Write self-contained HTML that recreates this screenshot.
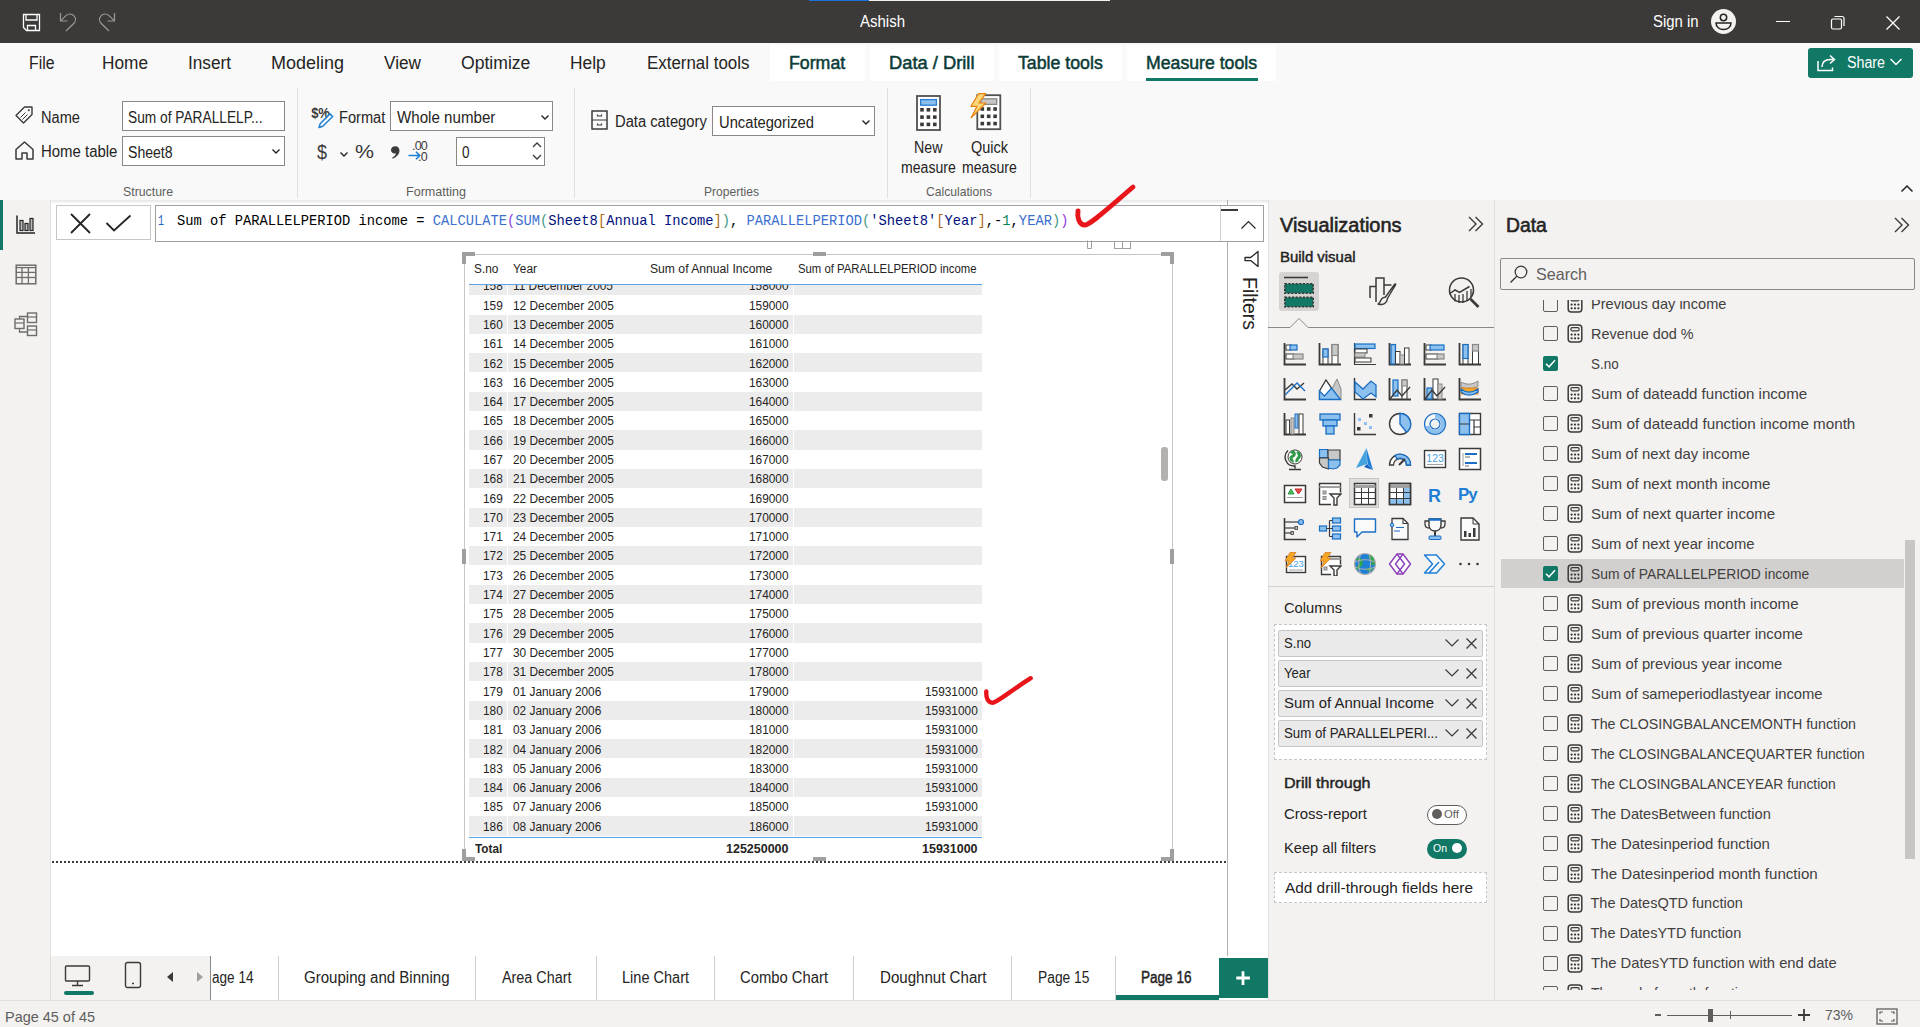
<!DOCTYPE html>
<html><head><meta charset="utf-8"><title>Power BI</title>
<style>
html,body{margin:0;padding:0;width:1920px;height:1027px;overflow:hidden;background:#fff;font-family:"Liberation Sans", sans-serif;}
.t{position:absolute;white-space:pre;line-height:1;}
.r{position:absolute;}
</style></head><body>
<div class="r" style="left:0px;top:0px;width:1920px;height:43px;background:#3b3a39;"></div>
<div class="r" style="left:809px;top:0px;width:60px;height:1px;background:#1a73d9;"></div>
<div class="r" style="left:869px;top:0px;width:241px;height:1px;background:#f0f0f0;"></div>
<div class="r" style="left:0px;top:43px;width:1920px;height:157px;background:#f9f9f9;"></div>
<div class="r" style="left:0px;top:200px;width:1920px;height:4px;background:linear-gradient(#e6e6e6,rgba(255,255,255,0));"></div>
<div class="r" style="left:0px;top:200px;width:50px;height:800px;background:#f3f2f1;"></div>
<div class="r" style="left:50px;top:200px;width:1px;height:800px;background:#e1dfdd;"></div>
<div class="r" style="left:0px;top:200px;width:3px;height:50px;background:#117865;"></div>
<div class="r" style="left:1268px;top:200px;width:652px;height:800px;background:#f3f2f1;"></div>
<div class="r" style="left:1268px;top:200px;width:1px;height:800px;background:#e1dfdd;"></div>
<div class="r" style="left:1494px;top:200px;width:1px;height:800px;background:#e1dfdd;"></div>
<div class="r" style="left:1227px;top:200px;width:1px;height:756px;background:#b3b1af;"></div>
<div class="r" style="left:0px;top:1000px;width:1920px;height:27px;background:#f3f2f1;"></div>
<div class="r" style="left:0px;top:1000px;width:1920px;height:1px;background:#e1dfdd;"></div>
<svg class="r" style="left:22px;top:13px;" width="19" height="19" viewBox="0 0 19 19" fill="none"><path d="M1.5 1.5h16v16h-13l-3-3z" stroke="#fff" stroke-width="1.3"/><path d="M4 1.5v5.5h11V1.5M5.5 17.5v-5h8v5" stroke="#fff" stroke-width="1.3"/></svg>
<svg class="r" style="left:59px;top:12px;" width="20" height="20" viewBox="0 0 20 20" fill="none"><path d="M1.5 1v8h7" stroke="#9a9998" stroke-width="1.2"/><path d="M1.8 8.6 7 3.6c2.4-2.2 6-2.1 8 .2 2 2.3 1.8 5.6-.3 7.7L7 19" stroke="#9a9998" stroke-width="1.2"/></svg>
<svg class="r" style="left:96px;top:12px;" width="20" height="20" viewBox="0 0 20 20" fill="none"><path d="M18.5 1v8h-7" stroke="#9a9998" stroke-width="1.2"/><path d="M18.2 8.6 13 3.6c-2.4-2.2-6-2.1-8 .2-2 2.3-1.8 5.6.3 7.7L13 19" stroke="#9a9998" stroke-width="1.2"/></svg>
<div class="t" style="left:859.50px;top:14px;font-size:16.00px;color:#ffffff;transform:scaleX(0.9372);transform-origin:0 0;">Ashish</div>
<div class="t" style="left:1653.00px;top:14px;font-size:16.00px;color:#ffffff;transform:scaleX(0.9299);transform-origin:0 0;">Sign in</div>
<svg class="r" style="left:1710px;top:8px;" width="27" height="27" viewBox="0 0 27 27" fill="none"><circle cx="13.5" cy="13.5" r="12.5" fill="#f3f2f1"/><circle cx="13.5" cy="9.5" r="3.2" stroke="#252423" stroke-width="1.5"/><path d="M6 15h15c0 4-3.3 6.5-7.5 6.5S6 19 6 15z" stroke="#252423" stroke-width="1.5"/></svg>
<div class="r" style="left:1776px;top:21px;width:14px;height:1.3px;background:#fff;"></div>
<svg class="r" style="left:1830px;top:15px;" width="16" height="16" viewBox="0 0 16 16" fill="none"><rect x="1.5" y="4" width="10" height="10" rx="1.5" stroke="#fff" stroke-width="1.2"/><path d="M4.5 1.5h7.5a2 2 0 0 1 2 2v7.5" stroke="#fff" stroke-width="1.2"/></svg>
<svg class="r" style="left:1885px;top:15px;" width="16" height="16" viewBox="0 0 16 16" fill="none"><path d="M1.5 1.5l13 13M14.5 1.5l-13 13" stroke="#fff" stroke-width="1.3"/></svg>
<div class="t" style="left:28.50px;top:55px;font-size:17.50px;color:#252423;transform:scaleX(0.9045);transform-origin:0 0;">File</div>
<div class="t" style="left:102.00px;top:55px;font-size:17.50px;color:#252423;transform:scaleX(0.9852);transform-origin:0 0;">Home</div>
<div class="t" style="left:188.00px;top:55px;font-size:17.50px;color:#252423;transform:scaleX(0.9825);transform-origin:0 0;">Insert</div>
<div class="t" style="left:271.00px;top:55px;font-size:17.50px;color:#252423;transform:scaleX(1.0280);transform-origin:0 0;">Modeling</div>
<div class="t" style="left:384.00px;top:55px;font-size:17.50px;color:#252423;transform:scaleX(0.9825);transform-origin:0 0;">View</div>
<div class="t" style="left:460.60px;top:55px;font-size:17.50px;color:#252423;transform:scaleX(1.0053);transform-origin:0 0;">Optimize</div>
<div class="t" style="left:570.00px;top:55px;font-size:17.50px;color:#252423;transform:scaleX(0.9917);transform-origin:0 0;">Help</div>
<div class="t" style="left:646.60px;top:55px;font-size:17.50px;color:#252423;transform:scaleX(0.9657);transform-origin:0 0;">External tools</div>
<div class="r" style="left:770px;top:45px;width:95px;height:36px;background:#ffffff;"></div>
<div class="t" style="left:789.30px;top:55px;font-size:17.50px;color:#0b3c36;-webkit-text-stroke:0.50px #0b3c36;transform:scaleX(1.0140);transform-origin:0 0;">Format</div>
<div class="r" style="left:870px;top:45px;width:124px;height:36px;background:#ffffff;"></div>
<div class="t" style="left:889.00px;top:55px;font-size:17.50px;color:#0b3c36;-webkit-text-stroke:0.50px #0b3c36;transform:scaleX(1.0466);transform-origin:0 0;">Data / Drill</div>
<div class="r" style="left:999px;top:45px;width:123px;height:36px;background:#ffffff;"></div>
<div class="t" style="left:1017.70px;top:55px;font-size:17.50px;color:#0b3c36;-webkit-text-stroke:0.50px #0b3c36;transform:scaleX(1.0135);transform-origin:0 0;">Table tools</div>
<div class="r" style="left:1127px;top:45px;width:149px;height:36px;background:#ffffff;"></div>
<div class="t" style="left:1146.00px;top:55px;font-size:17.50px;color:#0b3c36;-webkit-text-stroke:0.50px #0b3c36;transform:scaleX(1.0098);transform-origin:0 0;">Measure tools</div>
<div class="r" style="left:1146px;top:78px;width:112px;height:3px;background:#117865;"></div>
<div class="r" style="left:1808px;top:48px;width:105px;height:30px;background:#117865;border-radius:3px;"></div>
<svg class="r" style="left:1816px;top:53px;" width="22" height="20" viewBox="0 0 22 20" fill="none"><path d="M2 8v9.5h14.5v-3" stroke="#fff" stroke-width="1.5"/><path d="M6 14c0-5 3.5-7.5 8.5-7.5h2.5M14 2.5l4.5 4-4.5 4" stroke="#fff" stroke-width="1.5"/></svg>
<div class="t" style="left:1846.50px;top:55px;font-size:16.00px;color:#ffffff;transform:scaleX(0.8902);transform-origin:0 0;">Share</div>
<svg class="r" style="left:1889px;top:57px;" width="14" height="10" viewBox="0 0 14 10" fill="none"><path d="M1.5 2l5.5 5.5L12.5 2" stroke="#fff" stroke-width="1.5"/></svg>
<div class="r" style="left:297px;top:88px;width:1px;height:110px;background:#e1dfdd;"></div>
<div class="r" style="left:574px;top:88px;width:1px;height:110px;background:#e1dfdd;"></div>
<div class="r" style="left:887px;top:88px;width:1px;height:110px;background:#e1dfdd;"></div>
<div class="r" style="left:1030px;top:88px;width:1px;height:110px;background:#e1dfdd;"></div>
<svg class="r" style="left:14px;top:105px;" width="21" height="21" viewBox="0 0 21 21" fill="none"><path d="M2 10.5 10.5 2h7.5v7.5L9.5 18z" stroke="#3b3a39" stroke-width="1.4" stroke-linejoin="round"/><circle cx="14.8" cy="5.2" r="1" fill="#3b3a39"/><path d="M6.5 12.5l5-5M8.5 14.5l5-5" stroke="#3b3a39" stroke-width="1"/></svg>
<div class="t" style="left:40.60px;top:110px;font-size:16.00px;color:#252423;transform:scaleX(0.9113);transform-origin:0 0;">Name</div>
<svg class="r" style="left:14px;top:140px;" width="21" height="21" viewBox="0 0 21 21" fill="none"><path d="M2 9.5 10.5 2 19 9.5V19h-6v-6H8v6H2z" stroke="#3b3a39" stroke-width="1.5" stroke-linejoin="round"/></svg>
<div class="t" style="left:40.60px;top:144px;font-size:16.00px;color:#252423;transform:scaleX(0.9337);transform-origin:0 0;">Home table</div>
<div class="r" style="left:122px;top:101px;width:163px;height:30px;background:#ffffff;border:1px solid #8a8886;box-sizing:border-box;"></div>
<div class="t" style="left:128.40px;top:110px;font-size:16.00px;color:#252423;transform:scaleX(0.8576);transform-origin:0 0;">Sum of PARALLELP...</div>
<div class="r" style="left:122px;top:136px;width:163px;height:30px;background:#ffffff;border:1px solid #8a8886;box-sizing:border-box;"></div>
<div class="t" style="left:128.40px;top:145px;font-size:16.00px;color:#252423;transform:scaleX(0.8796);transform-origin:0 0;">Sheet8</div>
<svg class="r" style="left:271px;top:148px;" width="10" height="7" viewBox="0 0 10 7" fill="none"><path d="M1.5 1.5l3.5 3.5 3.5-3.5" stroke="#252423" stroke-width="1.4"/></svg>
<div class="t" style="left:123.00px;top:185px;font-size:13.50px;color:#605e5c;transform:scaleX(0.9129);transform-origin:0 0;">Structure</div>
<svg class="r" style="left:310px;top:104px;" width="26" height="26" viewBox="0 0 26 26" fill="none"><text x="1.5" y="14.5" font-family="Liberation Sans" font-weight="bold" font-size="14.5" fill="#3b3a39" transform="scale(0.9 1)" letter-spacing="-0.5">$%</text><path d="M9 23.5l1.2-3.8 9.8-9.8 2.6 2.6-9.8 9.8z" fill="#fff" stroke="#1d7fd1" stroke-width="1.5" stroke-linejoin="round"/></svg>
<div class="t" style="left:339.00px;top:110px;font-size:16.00px;color:#252423;transform:scaleX(0.9137);transform-origin:0 0;">Format</div>
<div class="r" style="left:390px;top:101px;width:163px;height:30px;background:#ffffff;border:1px solid #8a8886;box-sizing:border-box;"></div>
<div class="t" style="left:396.60px;top:110px;font-size:16.00px;color:#252423;transform:scaleX(0.9457);transform-origin:0 0;">Whole number</div>
<svg class="r" style="left:540px;top:114px;" width="10" height="7" viewBox="0 0 10 7" fill="none"><path d="M1.5 1.5l3.5 3.5 3.5-3.5" stroke="#252423" stroke-width="1.4"/></svg>
<div class="t" style="left:317.00px;top:141px;font-size:21.00px;color:#3b3a39;transform:scaleX(0.8565);transform-origin:0 0;">$</div>
<svg class="r" style="left:339px;top:151px;" width="10" height="7" viewBox="0 0 10 7" fill="none"><path d="M1.5 1.5l3.5 3.5 3.5-3.5" stroke="#252423" stroke-width="1.4"/></svg>
<div class="t" style="left:355.00px;top:142px;font-size:19.00px;color:#3b3a39;transform:scaleX(1.1249);transform-origin:0 0;">%</div>
<svg class="r" style="left:389px;top:143px;" width="12" height="17" viewBox="0 0 12 17" fill="none"><path d="M6.3 3.2c2.6 0 4.2 2 4.2 4.4 0 3.6-2.7 6.6-6.8 8.2l-.6-1.1c2.3-1.2 3.6-2.6 3.9-4.4-.4.2-.9.3-1.4.3C3.6 10.6 2 9 2 7c0-2.2 1.8-3.8 4.3-3.8z" fill="#3b3a39"/></svg>
<svg class="r" style="left:407px;top:139px;" width="26" height="24" viewBox="0 0 26 24" fill="none"><text x="5" y="10.5" font-family="Liberation Sans" font-size="12.5" fill="#3b3a39" letter-spacing="-0.8">.00</text><text x="11" y="21.5" font-family="Liberation Sans" font-size="12.5" fill="#3b3a39" letter-spacing="-0.8">.0</text><path d="M1.5 16.5h11M9 12.8l3.7 3.7L9 20.2" stroke="#1d7fd1" stroke-width="1.6"/></svg>
<div class="r" style="left:456px;top:137px;width:89px;height:29px;background:#ffffff;border:1px solid #8a8886;box-sizing:border-box;"></div>
<div class="t" style="left:462.00px;top:145px;font-size:16.00px;color:#252423;transform:scaleX(0.8431);transform-origin:0 0;">0</div>
<svg class="r" style="left:531px;top:140px;" width="12" height="22" viewBox="0 0 12 22" fill="none"><path d="M2 7l4-4 4 4M2 15l4 4 4-4" stroke="#3b3a39" stroke-width="1.3"/></svg>
<div class="t" style="left:406.40px;top:185px;font-size:13.50px;color:#605e5c;transform:scaleX(0.9300);transform-origin:0 0;">Formatting</div>
<svg class="r" style="left:591px;top:110px;" width="17" height="20" viewBox="0 0 17 20" fill="none"><rect x="1" y="1" width="15" height="18" stroke="#3b3a39" stroke-width="1.5"/><path d="M1 10h15M6.5 4.5v1.5h4V4.5M6.5 13.5v1.5h4v-1.5" stroke="#3b3a39" stroke-width="1.2"/></svg>
<div class="t" style="left:615.40px;top:114px;font-size:16.00px;color:#252423;transform:scaleX(0.9215);transform-origin:0 0;">Data category</div>
<div class="r" style="left:712px;top:106px;width:163px;height:30px;background:#ffffff;border:1px solid #8a8886;box-sizing:border-box;"></div>
<div class="t" style="left:718.80px;top:115px;font-size:16.00px;color:#252423;transform:scaleX(0.9208);transform-origin:0 0;">Uncategorized</div>
<svg class="r" style="left:861px;top:119px;" width="10" height="7" viewBox="0 0 10 7" fill="none"><path d="M1.5 1.5l3.5 3.5 3.5-3.5" stroke="#252423" stroke-width="1.4"/></svg>
<div class="t" style="left:703.50px;top:185px;font-size:13.50px;color:#605e5c;transform:scaleX(0.8938);transform-origin:0 0;">Properties</div>
<svg class="r" style="left:915.5px;top:94.5px;" width="26" height="37" viewBox="0 0 26 37" fill="none"><rect x="1" y="1" width="23" height="34" stroke="#505050" stroke-width="1.8" fill="#fff"/><rect x="4.6" y="4.6" width="15.8" height="5.6" fill="#8cc0ee" stroke="#2b7cd3" stroke-width="1.3"/><rect x="4.2" y="13" width="3.6" height="3.6" fill="#3b3a39"/><rect x="10.6" y="13" width="3.6" height="3.6" fill="#3b3a39"/><rect x="17" y="13" width="3.6" height="3.6" fill="#3b3a39"/><rect x="4.2" y="20.3" width="3.6" height="3.6" fill="#3b3a39"/><rect x="10.6" y="20.3" width="3.6" height="3.6" fill="#3b3a39"/><rect x="17" y="20.3" width="3.6" height="3.6" fill="#3b3a39"/><rect x="4.2" y="27.6" width="3.6" height="3.6" fill="#3b3a39"/><rect x="10.6" y="27.6" width="3.6" height="3.6" fill="#3b3a39"/><rect x="17" y="27.6" width="3.6" height="3.6" fill="#3b3a39"/></svg>
<svg class="r" style="left:969px;top:93px;" width="33" height="39" viewBox="0 0 33 39" fill="none"><rect x="8.3" y="2.2" width="23" height="34" stroke="#505050" stroke-width="1.8" fill="#fff"/><rect x="11.9" y="5.8" width="15.8" height="5.6" fill="#c8c6c4" stroke="#8a8886" stroke-width="1.3"/><rect x="11.5" y="14.2" width="3.6" height="3.6" fill="#3b3a39"/><rect x="17.9" y="14.2" width="3.6" height="3.6" fill="#3b3a39"/><rect x="24.3" y="14.2" width="3.6" height="3.6" fill="#3b3a39"/><rect x="11.5" y="21.5" width="3.6" height="3.6" fill="#3b3a39"/><rect x="17.9" y="21.5" width="3.6" height="3.6" fill="#3b3a39"/><rect x="24.3" y="21.5" width="3.6" height="3.6" fill="#3b3a39"/><rect x="11.5" y="28.8" width="3.6" height="3.6" fill="#3b3a39"/><rect x="17.9" y="28.8" width="3.6" height="3.6" fill="#3b3a39"/><rect x="24.3" y="28.8" width="3.6" height="3.6" fill="#3b3a39"/><path d="M16.8 0.7H9.5L2 13.3h6L2.2 24.8 16.8 10h-7z" fill="#f8d67a" stroke="#e8820c" stroke-width="1.2" stroke-linejoin="round"/></svg>
<div class="t" style="left:914.25px;top:140px;font-size:16.00px;color:#252423;transform:scaleX(0.8893);transform-origin:0 0;">New</div>
<div class="t" style="left:901.20px;top:160px;font-size:16.00px;color:#252423;transform:scaleX(0.8802);transform-origin:0 0;">measure</div>
<div class="t" style="left:971.00px;top:140px;font-size:16.00px;color:#252423;transform:scaleX(0.9040);transform-origin:0 0;">Quick</div>
<div class="t" style="left:961.60px;top:160px;font-size:16.00px;color:#252423;transform:scaleX(0.8802);transform-origin:0 0;">measure</div>
<div class="t" style="left:926.30px;top:185px;font-size:13.50px;color:#605e5c;transform:scaleX(0.8975);transform-origin:0 0;">Calculations</div>
<svg class="r" style="left:1900px;top:184px;" width="14" height="9" viewBox="0 0 14 9" fill="none"><path d="M1.5 7.5l5.5-5.5 5.5 5.5" stroke="#252423" stroke-width="1.5"/></svg>
<svg class="r" style="left:16px;top:215px;" width="20" height="19" viewBox="0 0 20 19" fill="none"><path d="M1 0.5V18h18" stroke="#252423" stroke-width="1.5"/><rect x="4" y="5.5" width="3" height="10" stroke="#252423" stroke-width="1.2" fill="#bdbdbd"/><rect x="9" y="8.5" width="3" height="7" stroke="#252423" stroke-width="1.2" fill="#bdbdbd"/><rect x="14" y="3.5" width="3" height="12" stroke="#252423" stroke-width="1.2" fill="#bdbdbd"/></svg>
<svg class="r" style="left:15px;top:264px;" width="22" height="21" viewBox="0 0 22 21" fill="none"><rect x="1.2" y="1.2" width="19.6" height="18.6" stroke="#6e6d6b" stroke-width="1.5"/><path d="M1 3.6h20" stroke="#6e6d6b" stroke-width="1.3"/><path d="M1 8.4h20" stroke="#6e6d6b" stroke-width="1.3"/><path d="M1 13.5h20" stroke="#6e6d6b" stroke-width="1.3"/><path d="M7 3.6v16" stroke="#6e6d6b" stroke-width="1.3"/><path d="M13.4 3.6v16" stroke="#6e6d6b" stroke-width="1.3"/></svg>
<svg class="r" style="left:14px;top:312px;" width="24" height="25" viewBox="0 0 24 25" fill="none"><rect x="1" y="7" width="9" height="9.5" stroke="#6e6d6b" stroke-width="1.4"/><path d="M1 11h9" stroke="#6e6d6b" stroke-width="1.2"/><rect x="13.5" y="1" width="9" height="9.5" stroke="#6e6d6b" stroke-width="1.4"/><path d="M13.5 5h9" stroke="#6e6d6b" stroke-width="1.2"/><rect x="13.5" y="14" width="9" height="9.5" stroke="#6e6d6b" stroke-width="1.4"/><path d="M13.5 18h9" stroke="#6e6d6b" stroke-width="1.2"/><path d="M5.5 7V4.5h8M5.5 16.5V20h8" stroke="#6e6d6b" stroke-width="1.3"/></svg>
<div class="r" style="left:56px;top:205px;width:95px;height:35px;background:#ffffff;border:1px solid #c8c6c4;box-sizing:border-box;"></div>
<svg class="r" style="left:69px;top:212px;" width="23" height="23" viewBox="0 0 23 23" fill="none"><path d="M2 2l19 19M21 2L2 21" stroke="#252423" stroke-width="1.8"/></svg>
<svg class="r" style="left:105px;top:214px;" width="27" height="19" viewBox="0 0 27 19" fill="none"><path d="M1.5 9l7.5 7.5L25.5 1.5" stroke="#252423" stroke-width="1.8"/></svg>
<div class="r" style="left:155px;top:205px;width:1109px;height:37px;background:#ffffff;border:1px solid #a19f9d;box-sizing:border-box;"></div>
<div class="r" style="left:1220px;top:206px;width:1px;height:35px;background:#d2d0ce;"></div>
<div class="r" style="left:1221px;top:209px;width:17px;height:2px;background:#3b3a39;"></div>
<svg class="r" style="left:1240px;top:219px;" width="17" height="11" viewBox="0 0 17 11" fill="none"><path d="M1.5 9.5l7-7 7 7" stroke="#252423" stroke-width="1.2"/></svg>
<div class="t" style="left:157.80px;top:214px;font-size:15.00px;color:#1f5fbf;font-family:'Liberation Mono', monospace;transform:scaleX(0.6667);transform-origin:0 0;">1</div>
<div class="t" style="left:176.60px;top:214px;font-size:15px;font-family:'Liberation Mono', monospace;transform:scaleX(0.9167);transform-origin:0 0;"><span style="color:#000000">Sum of PARALLELPERIOD income = </span><span style="color:#3a6fd0">CALCULATE</span><span style="color:#8a3ee0">(</span><span style="color:#3a6fd0">SUM</span><span style="color:#3f9a86">(</span><span style="color:#001080">Sheet8</span><span style="color:#b06b1c">[</span><span style="color:#001080">Annual Income</span><span style="color:#b06b1c">]</span><span style="color:#3f9a86">)</span><span style="color:#000000">, </span><span style="color:#3a6fd0">PARALLELPERIOD</span><span style="color:#3f9a86">(</span><span style="color:#001080">'Sheet8'</span><span style="color:#b06b1c">[</span><span style="color:#001080">Year</span><span style="color:#b06b1c">]</span><span style="color:#000000">,-</span><span style="color:#098658">1</span><span style="color:#000000">,</span><span style="color:#3a6fd0">YEAR</span><span style="color:#3f9a86">)</span><span style="color:#8a3ee0">)</span></div>
<svg class="r" style="left:1070px;top:178px;" width="70" height="56" viewBox="0 0 70 56" fill="none"><path d="M8 33c-1 6 1 14 7 14 6-1 20-14 48-38" stroke="#e8161b" stroke-width="4.9" stroke-linecap="round" stroke-linejoin="round"/></svg>
<svg class="r" style="left:980px;top:670px;" width="56" height="40" viewBox="0 0 56 40" fill="none"><path d="M6.3 21.5c-.4 6 1.5 11.2 6.2 11.2 4 0 12-7.5 38.2-24.5" stroke="#e8161b" stroke-width="4.4" stroke-linecap="round" stroke-linejoin="round"/></svg>
<svg class="r" style="left:1243px;top:250px;" width="17" height="17" viewBox="0 0 17 17" fill="none"><path d="M15 1.5V16.4L7.7 10.6H2V7.5H7.7Z" stroke="#252423" stroke-width="1.3" stroke-linejoin="round"/></svg>
<div class="t" style="left:1259px;top:277px;font-size:19.5px;color:#252423;transform:rotate(90deg) scaleX(1.0);transform-origin:0 0;">Filters</div>
<div class="r" style="left:464px;top:254px;width:709px;height:1px;background:#c8c6c4;"></div>
<div class="r" style="left:464px;top:254px;width:1px;height:607px;background:#c8c6c4;"></div>
<div class="r" style="left:1172px;top:254px;width:1px;height:607px;background:#c8c6c4;"></div>
<div class="r" style="left:462px;top:252px;width:13px;height:4px;background:#a19f9d;"></div>
<div class="r" style="left:462px;top:252px;width:4px;height:12px;background:#a19f9d;"></div>
<div class="r" style="left:1161px;top:252px;width:13px;height:4px;background:#a19f9d;"></div>
<div class="r" style="left:1170px;top:252px;width:4px;height:12px;background:#a19f9d;"></div>
<div class="r" style="left:462px;top:857px;width:13px;height:4px;background:#a19f9d;"></div>
<div class="r" style="left:462px;top:849px;width:4px;height:12px;background:#a19f9d;"></div>
<div class="r" style="left:1161px;top:857px;width:13px;height:4px;background:#a19f9d;"></div>
<div class="r" style="left:1170px;top:849px;width:4px;height:12px;background:#a19f9d;"></div>
<div class="r" style="left:813px;top:252px;width:13px;height:4px;background:#a19f9d;"></div>
<div class="r" style="left:813px;top:857px;width:13px;height:4px;background:#a19f9d;"></div>
<div class="r" style="left:462px;top:549px;width:4px;height:15px;background:#a19f9d;"></div>
<div class="r" style="left:1170px;top:549px;width:4px;height:15px;background:#a19f9d;"></div>
<svg class="r" style="left:1084px;top:240px;" width="50" height="10" viewBox="0 0 50 10" fill="none"><path d="M3.5 0.5v8h4v-8" stroke="#a19f9d" stroke-width="1"/><rect x="30.5" y="1.5" width="16" height="7" stroke="#a19f9d" stroke-width="1"/><path d="M38.5 1.5v7" stroke="#a19f9d" stroke-width="1"/></svg>
<div class="r" style="left:52px;top:861px;width:1175px;height:2px;background-image:linear-gradient(90deg,#3b3a39 50%,transparent 50%);background-size:4px 2px;"></div>
<div class="r" style="left:1161px;top:447px;width:7px;height:34px;background:#b3b0ad;border-radius:3px;"></div>
<div class="t" style="left:473.50px;top:263px;font-size:12.00px;color:#252423;transform:scaleX(0.9877);transform-origin:0 0;">S.no</div>
<div class="t" style="left:512.50px;top:263px;font-size:12.00px;color:#252423;transform:scaleX(0.9877);transform-origin:0 0;">Year</div>
<div class="t" style="left:649.70px;top:263px;font-size:12.00px;color:#252423;transform:scaleX(1.0129);transform-origin:0 0;">Sum of Annual Income</div>
<div class="t" style="left:798.10px;top:263px;font-size:12.00px;color:#252423;transform:scaleX(0.9435);transform-origin:0 0;">Sum of PARALLELPERIOD income</div>
<div class="r" style="left:469px;top:285px;width:513px;height:552px;overflow:hidden;">
<div class="r" style="left:0;top:-9.00px;width:513px;height:19.3px;background:#ececec;"></div>
<div class="r" style="left:38px;top:-9.00px;width:1px;height:19.3px;background:#ffffff;"></div>
<div class="r" style="left:324px;top:-9.00px;width:1px;height:19.3px;background:#ffffff;"></div>
<div class="r" style="left:0;top:29.60px;width:513px;height:19.3px;background:#ececec;"></div>
<div class="r" style="left:38px;top:29.60px;width:1px;height:19.3px;background:#ffffff;"></div>
<div class="r" style="left:324px;top:29.60px;width:1px;height:19.3px;background:#ffffff;"></div>
<div class="r" style="left:0;top:68.20px;width:513px;height:19.3px;background:#ececec;"></div>
<div class="r" style="left:38px;top:68.20px;width:1px;height:19.3px;background:#ffffff;"></div>
<div class="r" style="left:324px;top:68.20px;width:1px;height:19.3px;background:#ffffff;"></div>
<div class="r" style="left:0;top:106.80px;width:513px;height:19.3px;background:#ececec;"></div>
<div class="r" style="left:38px;top:106.80px;width:1px;height:19.3px;background:#ffffff;"></div>
<div class="r" style="left:324px;top:106.80px;width:1px;height:19.3px;background:#ffffff;"></div>
<div class="r" style="left:0;top:145.40px;width:513px;height:19.3px;background:#ececec;"></div>
<div class="r" style="left:38px;top:145.40px;width:1px;height:19.3px;background:#ffffff;"></div>
<div class="r" style="left:324px;top:145.40px;width:1px;height:19.3px;background:#ffffff;"></div>
<div class="r" style="left:0;top:184.00px;width:513px;height:19.3px;background:#ececec;"></div>
<div class="r" style="left:38px;top:184.00px;width:1px;height:19.3px;background:#ffffff;"></div>
<div class="r" style="left:324px;top:184.00px;width:1px;height:19.3px;background:#ffffff;"></div>
<div class="r" style="left:0;top:222.60px;width:513px;height:19.3px;background:#ececec;"></div>
<div class="r" style="left:38px;top:222.60px;width:1px;height:19.3px;background:#ffffff;"></div>
<div class="r" style="left:324px;top:222.60px;width:1px;height:19.3px;background:#ffffff;"></div>
<div class="r" style="left:0;top:261.20px;width:513px;height:19.3px;background:#ececec;"></div>
<div class="r" style="left:38px;top:261.20px;width:1px;height:19.3px;background:#ffffff;"></div>
<div class="r" style="left:324px;top:261.20px;width:1px;height:19.3px;background:#ffffff;"></div>
<div class="r" style="left:0;top:299.80px;width:513px;height:19.3px;background:#ececec;"></div>
<div class="r" style="left:38px;top:299.80px;width:1px;height:19.3px;background:#ffffff;"></div>
<div class="r" style="left:324px;top:299.80px;width:1px;height:19.3px;background:#ffffff;"></div>
<div class="r" style="left:0;top:338.40px;width:513px;height:19.3px;background:#ececec;"></div>
<div class="r" style="left:38px;top:338.40px;width:1px;height:19.3px;background:#ffffff;"></div>
<div class="r" style="left:324px;top:338.40px;width:1px;height:19.3px;background:#ffffff;"></div>
<div class="r" style="left:0;top:377.00px;width:513px;height:19.3px;background:#ececec;"></div>
<div class="r" style="left:38px;top:377.00px;width:1px;height:19.3px;background:#ffffff;"></div>
<div class="r" style="left:324px;top:377.00px;width:1px;height:19.3px;background:#ffffff;"></div>
<div class="r" style="left:0;top:415.60px;width:513px;height:19.3px;background:#ececec;"></div>
<div class="r" style="left:38px;top:415.60px;width:1px;height:19.3px;background:#ffffff;"></div>
<div class="r" style="left:324px;top:415.60px;width:1px;height:19.3px;background:#ffffff;"></div>
<div class="r" style="left:0;top:454.20px;width:513px;height:19.3px;background:#ececec;"></div>
<div class="r" style="left:38px;top:454.20px;width:1px;height:19.3px;background:#ffffff;"></div>
<div class="r" style="left:324px;top:454.20px;width:1px;height:19.3px;background:#ffffff;"></div>
<div class="r" style="left:0;top:492.80px;width:513px;height:19.3px;background:#ececec;"></div>
<div class="r" style="left:38px;top:492.80px;width:1px;height:19.3px;background:#ffffff;"></div>
<div class="r" style="left:324px;top:492.80px;width:1px;height:19.3px;background:#ffffff;"></div>
<div class="r" style="left:0;top:531.40px;width:513px;height:19.3px;background:#ececec;"></div>
<div class="r" style="left:38px;top:531.40px;width:1px;height:19.3px;background:#ffffff;"></div>
<div class="r" style="left:324px;top:531.40px;width:1px;height:19.3px;background:#ffffff;"></div>
<div class="t" style="left:13.93px;top:-5px;font-size:12.00px;color:#252423;transform:scaleX(0.9877);transform-origin:0 0;">158</div>
<div class="t" style="left:43.70px;top:-5px;font-size:12.00px;color:#252423;transform:scaleX(0.9877);transform-origin:0 0;">11 December 2005</div>
<div class="t" style="left:279.85px;top:-5px;font-size:12.00px;color:#252423;transform:scaleX(0.9877);transform-origin:0 0;">158000</div>
<div class="t" style="left:13.93px;top:15px;font-size:12.00px;color:#252423;transform:scaleX(0.9877);transform-origin:0 0;">159</div>
<div class="t" style="left:43.70px;top:15px;font-size:12.00px;color:#252423;transform:scaleX(0.9877);transform-origin:0 0;">12 December 2005</div>
<div class="t" style="left:279.85px;top:15px;font-size:12.00px;color:#252423;transform:scaleX(0.9877);transform-origin:0 0;">159000</div>
<div class="t" style="left:13.93px;top:34px;font-size:12.00px;color:#252423;transform:scaleX(0.9877);transform-origin:0 0;">160</div>
<div class="t" style="left:43.70px;top:34px;font-size:12.00px;color:#252423;transform:scaleX(0.9877);transform-origin:0 0;">13 December 2005</div>
<div class="t" style="left:279.85px;top:34px;font-size:12.00px;color:#252423;transform:scaleX(0.9877);transform-origin:0 0;">160000</div>
<div class="t" style="left:13.93px;top:53px;font-size:12.00px;color:#252423;transform:scaleX(0.9877);transform-origin:0 0;">161</div>
<div class="t" style="left:43.70px;top:53px;font-size:12.00px;color:#252423;transform:scaleX(0.9877);transform-origin:0 0;">14 December 2005</div>
<div class="t" style="left:279.85px;top:53px;font-size:12.00px;color:#252423;transform:scaleX(0.9877);transform-origin:0 0;">161000</div>
<div class="t" style="left:13.93px;top:73px;font-size:12.00px;color:#252423;transform:scaleX(0.9877);transform-origin:0 0;">162</div>
<div class="t" style="left:43.70px;top:73px;font-size:12.00px;color:#252423;transform:scaleX(0.9877);transform-origin:0 0;">15 December 2005</div>
<div class="t" style="left:279.85px;top:73px;font-size:12.00px;color:#252423;transform:scaleX(0.9877);transform-origin:0 0;">162000</div>
<div class="t" style="left:13.93px;top:92px;font-size:12.00px;color:#252423;transform:scaleX(0.9877);transform-origin:0 0;">163</div>
<div class="t" style="left:43.70px;top:92px;font-size:12.00px;color:#252423;transform:scaleX(0.9877);transform-origin:0 0;">16 December 2005</div>
<div class="t" style="left:279.85px;top:92px;font-size:12.00px;color:#252423;transform:scaleX(0.9877);transform-origin:0 0;">163000</div>
<div class="t" style="left:13.93px;top:111px;font-size:12.00px;color:#252423;transform:scaleX(0.9877);transform-origin:0 0;">164</div>
<div class="t" style="left:43.70px;top:111px;font-size:12.00px;color:#252423;transform:scaleX(0.9877);transform-origin:0 0;">17 December 2005</div>
<div class="t" style="left:279.85px;top:111px;font-size:12.00px;color:#252423;transform:scaleX(0.9877);transform-origin:0 0;">164000</div>
<div class="t" style="left:13.93px;top:130px;font-size:12.00px;color:#252423;transform:scaleX(0.9877);transform-origin:0 0;">165</div>
<div class="t" style="left:43.70px;top:130px;font-size:12.00px;color:#252423;transform:scaleX(0.9877);transform-origin:0 0;">18 December 2005</div>
<div class="t" style="left:279.85px;top:130px;font-size:12.00px;color:#252423;transform:scaleX(0.9877);transform-origin:0 0;">165000</div>
<div class="t" style="left:13.93px;top:150px;font-size:12.00px;color:#252423;transform:scaleX(0.9877);transform-origin:0 0;">166</div>
<div class="t" style="left:43.70px;top:150px;font-size:12.00px;color:#252423;transform:scaleX(0.9877);transform-origin:0 0;">19 December 2005</div>
<div class="t" style="left:279.85px;top:150px;font-size:12.00px;color:#252423;transform:scaleX(0.9877);transform-origin:0 0;">166000</div>
<div class="t" style="left:13.93px;top:169px;font-size:12.00px;color:#252423;transform:scaleX(0.9877);transform-origin:0 0;">167</div>
<div class="t" style="left:43.70px;top:169px;font-size:12.00px;color:#252423;transform:scaleX(0.9877);transform-origin:0 0;">20 December 2005</div>
<div class="t" style="left:279.85px;top:169px;font-size:12.00px;color:#252423;transform:scaleX(0.9877);transform-origin:0 0;">167000</div>
<div class="t" style="left:13.93px;top:188px;font-size:12.00px;color:#252423;transform:scaleX(0.9877);transform-origin:0 0;">168</div>
<div class="t" style="left:43.70px;top:188px;font-size:12.00px;color:#252423;transform:scaleX(0.9877);transform-origin:0 0;">21 December 2005</div>
<div class="t" style="left:279.85px;top:188px;font-size:12.00px;color:#252423;transform:scaleX(0.9877);transform-origin:0 0;">168000</div>
<div class="t" style="left:13.93px;top:208px;font-size:12.00px;color:#252423;transform:scaleX(0.9877);transform-origin:0 0;">169</div>
<div class="t" style="left:43.70px;top:208px;font-size:12.00px;color:#252423;transform:scaleX(0.9877);transform-origin:0 0;">22 December 2005</div>
<div class="t" style="left:279.85px;top:208px;font-size:12.00px;color:#252423;transform:scaleX(0.9877);transform-origin:0 0;">169000</div>
<div class="t" style="left:13.93px;top:227px;font-size:12.00px;color:#252423;transform:scaleX(0.9877);transform-origin:0 0;">170</div>
<div class="t" style="left:43.70px;top:227px;font-size:12.00px;color:#252423;transform:scaleX(0.9877);transform-origin:0 0;">23 December 2005</div>
<div class="t" style="left:279.85px;top:227px;font-size:12.00px;color:#252423;transform:scaleX(0.9877);transform-origin:0 0;">170000</div>
<div class="t" style="left:13.93px;top:246px;font-size:12.00px;color:#252423;transform:scaleX(0.9877);transform-origin:0 0;">171</div>
<div class="t" style="left:43.70px;top:246px;font-size:12.00px;color:#252423;transform:scaleX(0.9877);transform-origin:0 0;">24 December 2005</div>
<div class="t" style="left:279.85px;top:246px;font-size:12.00px;color:#252423;transform:scaleX(0.9877);transform-origin:0 0;">171000</div>
<div class="t" style="left:13.93px;top:265px;font-size:12.00px;color:#252423;transform:scaleX(0.9877);transform-origin:0 0;">172</div>
<div class="t" style="left:43.70px;top:265px;font-size:12.00px;color:#252423;transform:scaleX(0.9877);transform-origin:0 0;">25 December 2005</div>
<div class="t" style="left:279.85px;top:265px;font-size:12.00px;color:#252423;transform:scaleX(0.9877);transform-origin:0 0;">172000</div>
<div class="t" style="left:13.93px;top:285px;font-size:12.00px;color:#252423;transform:scaleX(0.9877);transform-origin:0 0;">173</div>
<div class="t" style="left:43.70px;top:285px;font-size:12.00px;color:#252423;transform:scaleX(0.9877);transform-origin:0 0;">26 December 2005</div>
<div class="t" style="left:279.85px;top:285px;font-size:12.00px;color:#252423;transform:scaleX(0.9877);transform-origin:0 0;">173000</div>
<div class="t" style="left:13.93px;top:304px;font-size:12.00px;color:#252423;transform:scaleX(0.9877);transform-origin:0 0;">174</div>
<div class="t" style="left:43.70px;top:304px;font-size:12.00px;color:#252423;transform:scaleX(0.9877);transform-origin:0 0;">27 December 2005</div>
<div class="t" style="left:279.85px;top:304px;font-size:12.00px;color:#252423;transform:scaleX(0.9877);transform-origin:0 0;">174000</div>
<div class="t" style="left:13.93px;top:323px;font-size:12.00px;color:#252423;transform:scaleX(0.9877);transform-origin:0 0;">175</div>
<div class="t" style="left:43.70px;top:323px;font-size:12.00px;color:#252423;transform:scaleX(0.9877);transform-origin:0 0;">28 December 2005</div>
<div class="t" style="left:279.85px;top:323px;font-size:12.00px;color:#252423;transform:scaleX(0.9877);transform-origin:0 0;">175000</div>
<div class="t" style="left:13.93px;top:343px;font-size:12.00px;color:#252423;transform:scaleX(0.9877);transform-origin:0 0;">176</div>
<div class="t" style="left:43.70px;top:343px;font-size:12.00px;color:#252423;transform:scaleX(0.9877);transform-origin:0 0;">29 December 2005</div>
<div class="t" style="left:279.85px;top:343px;font-size:12.00px;color:#252423;transform:scaleX(0.9877);transform-origin:0 0;">176000</div>
<div class="t" style="left:13.93px;top:362px;font-size:12.00px;color:#252423;transform:scaleX(0.9877);transform-origin:0 0;">177</div>
<div class="t" style="left:43.70px;top:362px;font-size:12.00px;color:#252423;transform:scaleX(0.9877);transform-origin:0 0;">30 December 2005</div>
<div class="t" style="left:279.85px;top:362px;font-size:12.00px;color:#252423;transform:scaleX(0.9877);transform-origin:0 0;">177000</div>
<div class="t" style="left:13.93px;top:381px;font-size:12.00px;color:#252423;transform:scaleX(0.9877);transform-origin:0 0;">178</div>
<div class="t" style="left:43.70px;top:381px;font-size:12.00px;color:#252423;transform:scaleX(0.9877);transform-origin:0 0;">31 December 2005</div>
<div class="t" style="left:279.85px;top:381px;font-size:12.00px;color:#252423;transform:scaleX(0.9877);transform-origin:0 0;">178000</div>
<div class="t" style="left:13.93px;top:401px;font-size:12.00px;color:#252423;transform:scaleX(0.9877);transform-origin:0 0;">179</div>
<div class="t" style="left:43.70px;top:401px;font-size:12.00px;color:#252423;transform:scaleX(0.9877);transform-origin:0 0;">01 January 2006</div>
<div class="t" style="left:279.85px;top:401px;font-size:12.00px;color:#252423;transform:scaleX(0.9877);transform-origin:0 0;">179000</div>
<div class="t" style="left:456.07px;top:401px;font-size:12.00px;color:#252423;transform:scaleX(0.9877);transform-origin:0 0;">15931000</div>
<div class="t" style="left:13.93px;top:420px;font-size:12.00px;color:#252423;transform:scaleX(0.9877);transform-origin:0 0;">180</div>
<div class="t" style="left:43.70px;top:420px;font-size:12.00px;color:#252423;transform:scaleX(0.9877);transform-origin:0 0;">02 January 2006</div>
<div class="t" style="left:279.85px;top:420px;font-size:12.00px;color:#252423;transform:scaleX(0.9877);transform-origin:0 0;">180000</div>
<div class="t" style="left:456.07px;top:420px;font-size:12.00px;color:#252423;transform:scaleX(0.9877);transform-origin:0 0;">15931000</div>
<div class="t" style="left:13.93px;top:439px;font-size:12.00px;color:#252423;transform:scaleX(0.9877);transform-origin:0 0;">181</div>
<div class="t" style="left:43.70px;top:439px;font-size:12.00px;color:#252423;transform:scaleX(0.9877);transform-origin:0 0;">03 January 2006</div>
<div class="t" style="left:279.85px;top:439px;font-size:12.00px;color:#252423;transform:scaleX(0.9877);transform-origin:0 0;">181000</div>
<div class="t" style="left:456.07px;top:439px;font-size:12.00px;color:#252423;transform:scaleX(0.9877);transform-origin:0 0;">15931000</div>
<div class="t" style="left:13.93px;top:459px;font-size:12.00px;color:#252423;transform:scaleX(0.9877);transform-origin:0 0;">182</div>
<div class="t" style="left:43.70px;top:459px;font-size:12.00px;color:#252423;transform:scaleX(0.9877);transform-origin:0 0;">04 January 2006</div>
<div class="t" style="left:279.85px;top:459px;font-size:12.00px;color:#252423;transform:scaleX(0.9877);transform-origin:0 0;">182000</div>
<div class="t" style="left:456.07px;top:459px;font-size:12.00px;color:#252423;transform:scaleX(0.9877);transform-origin:0 0;">15931000</div>
<div class="t" style="left:13.93px;top:478px;font-size:12.00px;color:#252423;transform:scaleX(0.9877);transform-origin:0 0;">183</div>
<div class="t" style="left:43.70px;top:478px;font-size:12.00px;color:#252423;transform:scaleX(0.9877);transform-origin:0 0;">05 January 2006</div>
<div class="t" style="left:279.85px;top:478px;font-size:12.00px;color:#252423;transform:scaleX(0.9877);transform-origin:0 0;">183000</div>
<div class="t" style="left:456.07px;top:478px;font-size:12.00px;color:#252423;transform:scaleX(0.9877);transform-origin:0 0;">15931000</div>
<div class="t" style="left:13.93px;top:497px;font-size:12.00px;color:#252423;transform:scaleX(0.9877);transform-origin:0 0;">184</div>
<div class="t" style="left:43.70px;top:497px;font-size:12.00px;color:#252423;transform:scaleX(0.9877);transform-origin:0 0;">06 January 2006</div>
<div class="t" style="left:279.85px;top:497px;font-size:12.00px;color:#252423;transform:scaleX(0.9877);transform-origin:0 0;">184000</div>
<div class="t" style="left:456.07px;top:497px;font-size:12.00px;color:#252423;transform:scaleX(0.9877);transform-origin:0 0;">15931000</div>
<div class="t" style="left:13.93px;top:516px;font-size:12.00px;color:#252423;transform:scaleX(0.9877);transform-origin:0 0;">185</div>
<div class="t" style="left:43.70px;top:516px;font-size:12.00px;color:#252423;transform:scaleX(0.9877);transform-origin:0 0;">07 January 2006</div>
<div class="t" style="left:279.85px;top:516px;font-size:12.00px;color:#252423;transform:scaleX(0.9877);transform-origin:0 0;">185000</div>
<div class="t" style="left:456.07px;top:516px;font-size:12.00px;color:#252423;transform:scaleX(0.9877);transform-origin:0 0;">15931000</div>
<div class="t" style="left:13.93px;top:536px;font-size:12.00px;color:#252423;transform:scaleX(0.9877);transform-origin:0 0;">186</div>
<div class="t" style="left:43.70px;top:536px;font-size:12.00px;color:#252423;transform:scaleX(0.9877);transform-origin:0 0;">08 January 2006</div>
<div class="t" style="left:279.85px;top:536px;font-size:12.00px;color:#252423;transform:scaleX(0.9877);transform-origin:0 0;">186000</div>
<div class="t" style="left:456.07px;top:536px;font-size:12.00px;color:#252423;transform:scaleX(0.9877);transform-origin:0 0;">15931000</div>
</div>
<div class="r" style="left:469px;top:284px;width:513px;height:1px;background:#5ea3e8;"></div>
<div class="r" style="left:469px;top:837px;width:513px;height:1px;background:#5ea3e8;"></div>
<div class="t" style="left:475.00px;top:843px;font-size:12.00px;color:#252423;font-weight:bold;transform:scaleX(0.9795);transform-origin:0 0;">Total</div>
<div class="t" style="left:725.90px;top:843px;font-size:12.00px;color:#252423;font-weight:bold;transform:scaleX(1.0406);transform-origin:0 0;">125250000</div>
<div class="t" style="left:922.24px;top:843px;font-size:12.00px;color:#252423;font-weight:bold;transform:scaleX(1.0406);transform-origin:0 0;">15931000</div>
<div class="t" style="left:1279.70px;top:215px;font-size:20.00px;color:#252423;-webkit-text-stroke:0.60px #252423;transform:scaleX(0.9966);transform-origin:0 0;">Visualizations</div>
<svg class="r" style="left:1467px;top:215px;" width="18" height="18" viewBox="0 0 18 18" fill="none"><path d="M2 2l7 7-7 7M8.5 2l7 7-7 7" stroke="#3b3a39" stroke-width="1.4"/></svg>
<div class="t" style="left:1279.70px;top:250px;font-size:14.50px;color:#252423;-webkit-text-stroke:0.45px #252423;transform:scaleX(1.0294);transform-origin:0 0;">Build visual</div>
<div class="r" style="left:1279px;top:272px;width:40px;height:39px;background:#d6d4d2;border-radius:3px;"></div>
<svg class="r" style="left:1280px;top:273px;" width="38" height="38" viewBox="0 0 38 38" fill="none"><path d="M4 4.5h24" stroke="#3b3a39" stroke-width="1.6"/><rect x="4.8" y="10.8" width="28.4" height="9.4" fill="#117865" stroke="#3b3a39" stroke-width="1.6" stroke-dasharray="2.2 1.4"/><rect x="4.8" y="24.4" width="28.4" height="9.4" fill="#117865" stroke="#3b3a39" stroke-width="1.6" stroke-dasharray="2.2 1.4"/></svg>
<svg class="r" style="left:1366px;top:275px;" width="34" height="34" viewBox="0 0 34 34" fill="none"><path d="M4 23V11.5h6M10 27V3h8v17M18 10h7.5" stroke="#3b3a39" stroke-width="1.5"/><path d="M28.5 9.5l-9 12.5c-1 .5-2.5.5-3.5 1.5-1.5 1.5-1.5 4-4 5.5 3.5 1 7 0 8.5-2.5 1-1.5.5-3 1.5-4l7.5-12.5c.6-1-.5-1.5-1-.5z" fill="#f3f2f1" stroke="#3b3a39" stroke-width="1.4" stroke-linejoin="round"/></svg>
<svg class="r" style="left:1447px;top:275px;" width="34" height="34" viewBox="0 0 34 34" fill="none"><circle cx="14.5" cy="15" r="12" stroke="#3b3a39" stroke-width="1.6"/><path d="M3 18.5l5-3.5 4.5 2.5 10-6" stroke="#3b3a39" stroke-width="1.5"/><path d="M8 19v7.5M12 20v8M16 19v9M20 16v10M24 14v8" stroke="#3b3a39" stroke-width="1.3"/><path d="M23.5 24l8 8" stroke="#3b3a39" stroke-width="2.6"/></svg>
<svg class="r" style="left:1268px;top:316px;" width="226" height="13" viewBox="0 0 226 13" fill="none"><path d="M0 11.5h22l9-9 9 9h186" stroke="#8a8886" stroke-width="1"/></svg>
<svg class="r" style="left:1283px;top:342px;" width="24" height="24" viewBox="0 0 24 24" fill="none"><path d="M1.5 1v21.5H23" stroke="#3b3a39" stroke-width="1.8"/><rect x="3" y="3" width="5" height="5" fill="#fff" stroke="#3b3a39" stroke-width="1"/><rect x="7" y="3" width="7" height="5" fill="#8cc0ee" stroke="#1a6fc4" stroke-width="1.2"/><rect x="3" y="12" width="8" height="5" fill="#fff" stroke="#3b3a39"/><rect x="10" y="12" width="10" height="5" fill="#c8c8c8" stroke="#8a8886" stroke-width="1.2"/></svg>
<svg class="r" style="left:1318px;top:342px;" width="24" height="24" viewBox="0 0 24 24" fill="none"><path d="M1.5 1v21.5H23" stroke="#3b3a39" stroke-width="1.8"/><rect x="5" y="7" width="5" height="15" fill="#fff" stroke="#3b3a39"/><rect x="5" y="7" width="5" height="8" fill="#8cc0ee" stroke="#1a6fc4" stroke-width="1.2"/><rect x="14" y="2.5" width="6" height="19.5" fill="#fff" stroke="#3b3a39"/><rect x="14" y="2.5" width="6" height="11" fill="#c8c8c8" stroke="#8a8886" stroke-width="1.2"/></svg>
<svg class="r" style="left:1353px;top:342px;" width="24" height="24" viewBox="0 0 24 24" fill="none"><path d="M1.5 1v21.5H23" stroke="#3b3a39" stroke-width="1.2"/><rect x="2" y="2" width="20" height="4.5" fill="#8cc0ee" stroke="#1a6fc4" stroke-width="1.2"/><rect x="2" y="7" width="12" height="4" fill="#fff" stroke="#3b3a39"/><rect x="2" y="11" width="10" height="4" fill="#c8c8c8" stroke="#8a8886"/><rect x="2" y="16" width="16" height="4" fill="#fff" stroke="#3b3a39"/></svg>
<svg class="r" style="left:1388px;top:342px;" width="24" height="24" viewBox="0 0 24 24" fill="none"><path d="M1.5 1v21.5H23" stroke="#3b3a39" stroke-width="1.8"/><rect x="3" y="2.5" width="4.5" height="19.5" fill="#8cc0ee" stroke="#1a6fc4" stroke-width="1.2"/><rect x="7.5" y="9.5" width="4.5" height="12.5" fill="#fff" stroke="#3b3a39"/><rect x="12" y="13" width="4.5" height="9" fill="#c8c8c8" stroke="#8a8886"/><rect x="16.5" y="6" width="4.5" height="16" fill="#fff" stroke="#3b3a39"/></svg>
<svg class="r" style="left:1423px;top:342px;" width="24" height="24" viewBox="0 0 24 24" fill="none"><path d="M1.5 1v21.5H23" stroke="#3b3a39" stroke-width="1.8"/><rect x="3" y="3" width="5" height="5" fill="#fff" stroke="#3b3a39"/><rect x="7" y="3" width="14" height="5" fill="#8cc0ee" stroke="#1a6fc4" stroke-width="1.2"/><rect x="3" y="12" width="12" height="5" fill="#fff" stroke="#3b3a39"/><rect x="14" y="12" width="7" height="5" fill="#c8c8c8" stroke="#8a8886" stroke-width="1.2"/></svg>
<svg class="r" style="left:1458px;top:342px;" width="24" height="24" viewBox="0 0 24 24" fill="none"><path d="M1.5 1v21.5H23" stroke="#3b3a39" stroke-width="1.8"/><rect x="5" y="2.5" width="5" height="19.5" fill="#fff" stroke="#3b3a39"/><rect x="5" y="2.5" width="5" height="14" fill="#8cc0ee" stroke="#1a6fc4" stroke-width="1.2"/><rect x="14.5" y="2.5" width="6" height="19.5" fill="#fff" stroke="#3b3a39"/><rect x="14.5" y="2.5" width="6" height="6.5" fill="#c8c8c8" stroke="#8a8886" stroke-width="1.2"/></svg>
<svg class="r" style="left:1283px;top:377px;" width="24" height="24" viewBox="0 0 24 24" fill="none"><path d="M1.5 1v21.5H23" stroke="#3b3a39" stroke-width="1.8"/><path d="M2 13l7-6 5 5 7-6" stroke="#3b3a39" stroke-width="1.4"/><path d="M2 18l12-12 8 8" stroke="#1a6fc4" stroke-width="1.4"/></svg>
<svg class="r" style="left:1318px;top:377px;" width="24" height="24" viewBox="0 0 24 24" fill="none"><path d="M1.5 14L8 3l6 9 5-10 4 10v10.5H1.5z" fill="#c8c8c8" stroke="#8a8886" stroke-width="1"/><path d="M1.5 14L8 3l6 9V22H1.5z" fill="#fff" stroke="#3b3a39" stroke-width="1.3"/><path d="M1.5 22.5V14l5 5 7-8 9 11.5z" fill="#8cc0ee" stroke="#1a6fc4" stroke-width="1.3"/></svg>
<svg class="r" style="left:1353px;top:377px;" width="24" height="24" viewBox="0 0 24 24" fill="none"><path d="M1.5 1v21.5H23" stroke="#3b3a39" stroke-width="1.5"/><path d="M2 5l8 7 8-8 5 4v12l-5-4-8 6-8-7z" fill="#8cc0ee" stroke="#1a6fc4" stroke-width="1.3"/></svg>
<svg class="r" style="left:1388px;top:377px;" width="24" height="24" viewBox="0 0 24 24" fill="none"><path d="M1.5 1v21.5H23" stroke="#3b3a39" stroke-width="1.8"/><rect x="5" y="3" width="5" height="16" fill="#8cc0ee" stroke="#1a6fc4" stroke-width="1.2"/><rect x="14" y="3" width="5" height="19" fill="#fff" stroke="#3b3a39"/><rect x="14" y="3" width="5" height="6" fill="#c8c8c8" stroke="#8a8886"/><path d="M2 22l7-9 5 6 8-9" stroke="#3b3a39" stroke-width="1.4"/></svg>
<svg class="r" style="left:1423px;top:377px;" width="24" height="24" viewBox="0 0 24 24" fill="none"><path d="M1.5 1v21.5H23" stroke="#3b3a39" stroke-width="1.8"/><rect x="4" y="11" width="5" height="11" fill="#8cc0ee" stroke="#1a6fc4" stroke-width="1.2"/><rect x="10" y="2" width="5" height="20" fill="#fff" stroke="#3b3a39"/><rect x="15" y="7" width="4" height="15" fill="#c8c8c8" stroke="#8a8886"/><path d="M2 22l7-9 5 6 8-9" stroke="#3b3a39" stroke-width="1.4"/></svg>
<svg class="r" style="left:1458px;top:377px;" width="24" height="24" viewBox="0 0 24 24" fill="none"><path d="M1.5 1v21.5H23" stroke="#3b3a39" stroke-width="1.8"/><path d="M3 5c5 3 11 3 17-1v5c-6 4-12 4-17 1z" fill="#c8c8c8" stroke="#8a8886"/><rect x="3" y="11" width="17" height="6" fill="#f5a623" stroke="#d9822b"/><path d="M3 12c5 4 11 4 17 0v3c-6 4-12 4-17 0z" fill="#8cc0ee" stroke="#1a6fc4" stroke-width="1.3"/></svg>
<svg class="r" style="left:1283px;top:412px;" width="24" height="24" viewBox="0 0 24 24" fill="none"><path d="M1.5 1v21.5H23" stroke="#3b3a39" stroke-width="1.8"/><rect x="3" y="8" width="3.5" height="14" fill="#fff" stroke="#3b3a39"/><rect x="8" y="6" width="3" height="16" fill="#c8c8c8" stroke="#8a8886"/><rect x="12" y="2" width="3" height="14" fill="#8cc0ee" stroke="#1a6fc4"/><rect x="16" y="2" width="4" height="20" fill="#fff" stroke="#3b3a39"/></svg>
<svg class="r" style="left:1318px;top:412px;" width="24" height="24" viewBox="0 0 24 24" fill="none"><rect x="2" y="2" width="20" height="6" fill="#8cc0ee" stroke="#1a6fc4" stroke-width="1.3"/><rect x="5" y="8" width="14" height="6" fill="#8cc0ee" stroke="#1a6fc4" stroke-width="1.3"/><rect x="8" y="14" width="8" height="8" fill="#8cc0ee" stroke="#1a6fc4" stroke-width="1.3"/></svg>
<svg class="r" style="left:1353px;top:412px;" width="24" height="24" viewBox="0 0 24 24" fill="none"><path d="M1.5 1v21.5H23" stroke="#3b3a39" stroke-width="1.4"/><rect x="5" y="6" width="3" height="3" fill="#8cc0ee"/><rect x="11" y="10" width="3" height="3" fill="#8cc0ee"/><rect x="16" y="14" width="3" height="3" fill="#8cc0ee"/><rect x="16" y="2" width="3.5" height="3.5" fill="#3b3a39"/><rect x="4" y="15" width="3.5" height="3.5" fill="#3b3a39"/></svg>
<svg class="r" style="left:1388px;top:412px;" width="24" height="24" viewBox="0 0 24 24" fill="none"><circle cx="12" cy="12" r="10.5" fill="#f8f8f8" stroke="#3b3a39" stroke-width="1.4"/><path d="M12 1.5A10.5 10.5 0 0 1 18.5 20.3L12 12z" fill="#8cc0ee" stroke="#1a6fc4" stroke-width="1.4"/></svg>
<svg class="r" style="left:1423px;top:412px;" width="24" height="24" viewBox="0 0 24 24" fill="none"><circle cx="12" cy="12" r="8" stroke="#f8f8f8" stroke-width="5.5"/><path d="M12 4A8 8 0 1 1 4.3 14" stroke="#8cc0ee" stroke-width="4"/><path d="M1.5 12A10.5 10.5 0 0 1 12 1.5M12 1.5A10.5 10.5 0 1 1 1.5 12" stroke="#1a6fc4" stroke-width="1.2"/><circle cx="12" cy="12" r="5" stroke="#1a6fc4" stroke-width="1.2"/></svg>
<svg class="r" style="left:1458px;top:412px;" width="24" height="24" viewBox="0 0 24 24" fill="none"><rect x="1.5" y="1.5" width="21" height="21" fill="#fff" stroke="#3b3a39" stroke-width="1.4"/><rect x="1.5" y="1.5" width="10" height="21" fill="#8cc0ee" stroke="#1a6fc4" stroke-width="1.4"/><path d="M1.5 12h10M11.5 8h11M16 8v14.5M16 15h6.5" stroke="#3b3a39" stroke-width="1.2"/></svg>
<svg class="r" style="left:1283px;top:447px;" width="24" height="24" viewBox="0 0 24 24" fill="none"><circle cx="12" cy="10" r="7" fill="#fff" stroke="#3b3a39" stroke-width="1"/><path d="M8 6c2-2 4 0 3 2s-3 1-3 3 2 3 1 4M14 5c2 1 3 3 2 5s-3 2-2 5" stroke="#2e9a48" stroke-width="3"/><path d="M5 3.5A9 9 0 0 0 12 19v2.5M6 22.5h12" stroke="#3b3a39" stroke-width="1.4"/></svg>
<svg class="r" style="left:1318px;top:447px;" width="24" height="24" viewBox="0 0 24 24" fill="none"><path d="M1.5 2.5h8l1 8h-9z" fill="#8cc0ee" stroke="#1a6fc4" stroke-width="1.2"/><path d="M10 3h12v10H10z" fill="#c8c8c8" stroke="#3b3a39" stroke-width="1.2"/><path d="M1.5 11h9v11l-6-2-3-4z" fill="#c8c8c8" stroke="#3b3a39" stroke-width="1.2"/><path d="M10.5 13h11.5v5l-3 3-4 1-4.5-1z" fill="#8cc0ee" stroke="#1a6fc4" stroke-width="1.2"/></svg>
<svg class="r" style="left:1353px;top:447px;" width="24" height="24" viewBox="0 0 24 24" fill="none"><path d="M13.5 1L3 21l11-4z" fill="#44a3dd"/><path d="M13.5 1l1 16L20 23z" fill="#1f7fd6"/><path d="M14 17l6 6-9-3z" fill="#0e62c2"/></svg>
<svg class="r" style="left:1388px;top:447px;" width="24" height="24" viewBox="0 0 24 24" fill="none"><path d="M1.5 18a10.5 10.5 0 0 1 21 0h-4a6.5 6.5 0 0 0-13 0z" fill="#fff" stroke="#3b3a39" stroke-width="1.3"/><path d="M7 8.5A10.5 10.5 0 0 1 22.5 18h-4A6.5 6.5 0 0 0 9 12z" fill="#8cc0ee" stroke="#1a6fc4" stroke-width="1.3"/><path d="M11 18l6-6" stroke="#3b3a39" stroke-width="2"/></svg>
<svg class="r" style="left:1423px;top:447px;" width="24" height="24" viewBox="0 0 24 24" fill="none"><rect x="1.5" y="3.5" width="21" height="17" fill="#fff" stroke="#3b3a39" stroke-width="1.4"/><text x="3.3" y="14.5" font-family="Liberation Sans" font-size="10.5" fill="#4aa0e0">123</text><path d="M4 17.5h16" stroke="#a0a0a0" stroke-width="1"/></svg>
<svg class="r" style="left:1458px;top:447px;" width="24" height="24" viewBox="0 0 24 24" fill="none"><rect x="1.5" y="1.5" width="21" height="21" fill="#fff" stroke="#3b3a39" stroke-width="1.5"/><path d="M5 6v13" stroke="#a0a0a0"/><path d="M7 7h12M7 16h12" stroke="#1a6fc4" stroke-width="2"/><path d="M7 10h5M7 19h4" stroke="#a0a0a0" stroke-width="1.3"/></svg>
<svg class="r" style="left:1283px;top:482px;" width="24" height="24" viewBox="0 0 24 24" fill="none"><rect x="1.5" y="3.5" width="21" height="17" fill="#fff" stroke="#3b3a39" stroke-width="1.5"/><path d="M5 12l3-5 3 5z" fill="#4bb866" stroke="#2e9a48"/><path d="M12 7h7l-3.5 5z" fill="#e84b4b" stroke="#c62828"/><path d="M4 15.5h16" stroke="#a0a0a0" stroke-width="1"/></svg>
<svg class="r" style="left:1318px;top:482px;" width="24" height="24" viewBox="0 0 24 24" fill="none"><path d="M13 22.5H1.5v-21h21v9" fill="#fff" stroke="#3b3a39" stroke-width="1.4"/><path d="M1.5 5h21" stroke="#a0a0a0" stroke-width="2"/><rect x="5" y="9" width="3" height="3" fill="#bdbdbd" stroke="#8a8886"/><rect x="5" y="14.5" width="3" height="3" fill="#bdbdbd" stroke="#8a8886"/><path d="M12 12h11l-4 4v7h-3v-7z" fill="#fff" stroke="#3b3a39" stroke-width="1.4"/></svg>
<div class="r" style="left:1349px;top:478px;width:30px;height:30px;background:#e1dfdd;border:1px solid #c8c6c4;box-sizing:border-box;"></div>
<svg class="r" style="left:1353px;top:482px;" width="24" height="24" viewBox="0 0 24 24" fill="none"><rect x="1.5" y="1.5" width="21" height="21" fill="#fff" stroke="#3b3a39" stroke-width="1.5"/><path d="M1.5 4.5h21" stroke="#a0a0a0" stroke-width="3"/><path d="M1.5 10.5h21M1.5 16.5h21M8.5 6v16M15.5 6v16" stroke="#3b3a39" stroke-width="1"/></svg>
<svg class="r" style="left:1388px;top:482px;" width="24" height="24" viewBox="0 0 24 24" fill="none"><rect x="1.5" y="1.5" width="21" height="21" fill="#fff" stroke="#3b3a39" stroke-width="1.5"/><path d="M1.5 4.5h21" stroke="#a0a0a0" stroke-width="3"/><rect x="15" y="6" width="7.5" height="16.5" fill="#8cc0ee"/><rect x="1.5" y="16" width="21" height="6.5" fill="#8cc0ee"/><path d="M1.5 10.5h21M1.5 16.5h21M8.5 6v16M15.5 6v16" stroke="#3b3a39" stroke-width="1"/><rect x="1.5" y="1.5" width="21" height="21" stroke="#3b3a39" stroke-width="1.5"/></svg>
<svg class="r" style="left:1423px;top:482px;" width="24" height="24" viewBox="0 0 24 24" fill="none"><text x="5" y="20" font-family="Liberation Sans" font-weight="bold" font-size="18" fill="#1f7fd6">R</text></svg>
<svg class="r" style="left:1458px;top:482px;" width="24" height="24" viewBox="0 0 24 24" fill="none"><text x="0" y="18" font-family="Liberation Sans" font-weight="bold" font-size="17" fill="#1f7fd6" letter-spacing="-1">Py</text></svg>
<svg class="r" style="left:1283px;top:517px;" width="24" height="24" viewBox="0 0 24 24" fill="none"><path d="M1.5 1v21.5H23" stroke="#3b3a39" stroke-width="1.6"/><path d="M2 5h14M2 11h10M2 16h6" stroke="#606060" stroke-width="1.3"/><circle cx="18" cy="5" r="2.5" fill="#8cc0ee" stroke="#1a6fc4" stroke-width="1.2"/><rect x="12" y="9.5" width="2.5" height="3" fill="#bdbdbd" stroke="#3b3a39" stroke-width="0.8"/><rect x="8" y="14.5" width="2.5" height="3" fill="#bdbdbd" stroke="#3b3a39" stroke-width="0.8"/></svg>
<svg class="r" style="left:1318px;top:517px;" width="24" height="24" viewBox="0 0 24 24" fill="none"><rect x="1.5" y="9" width="7" height="5" fill="#8cc0ee" stroke="#1a6fc4" stroke-width="1.2"/><rect x="14.5" y="1" width="8" height="5" fill="#8cc0ee" stroke="#1a6fc4" stroke-width="1.2"/><rect x="14.5" y="9" width="8" height="5" fill="#8cc0ee" stroke="#1a6fc4" stroke-width="1.2"/><rect x="14.5" y="17" width="8" height="5" fill="#8cc0ee" stroke="#1a6fc4" stroke-width="1.2"/><path d="M8.5 11.5h3M11.5 3.5v16M11.5 3.5h3M11.5 11.5h3M11.5 19.5h3" stroke="#3b3a39" stroke-width="1.2"/></svg>
<svg class="r" style="left:1353px;top:517px;" width="24" height="24" viewBox="0 0 24 24" fill="none"><path d="M1.5 2h21v13H9l-5 5v-5H1.5z" fill="#fafafa" stroke="#1a6fc4" stroke-width="1.4" stroke-linejoin="round"/></svg>
<svg class="r" style="left:1388px;top:517px;" width="24" height="24" viewBox="0 0 24 24" fill="none"><path d="M4 1.5h11l5 5v16H4z" fill="#fafafa" stroke="#3b3a39" stroke-width="1.3"/><path d="M15 1.5v5h5" stroke="#3b3a39" stroke-width="1.1"/><circle cx="4" cy="8" r="1.8" fill="#8cc0ee" stroke="#1a6fc4"/><path d="M8 10.5h8M6 14h6" stroke="#1a6fc4" stroke-width="1"/></svg>
<svg class="r" style="left:1423px;top:517px;" width="24" height="24" viewBox="0 0 24 24" fill="none"><path d="M6 2h12v6c0 4-3 6-6 6s-6-2-6-6z" fill="#fafafa" stroke="#3b3a39" stroke-width="1.4"/><path d="M6 4H2v3c0 3 2 4 4 4M18 4h4v3c0 3-2 4-4 4" stroke="#3b3a39" stroke-width="1.3"/><path d="M6 2.5h12" stroke="#1a6fc4" stroke-width="2.5"/><path d="M12 14v5" stroke="#3b3a39" stroke-width="2"/><rect x="6" y="19" width="12" height="3.5" rx="1" fill="#8cc0ee" stroke="#1a6fc4"/></svg>
<svg class="r" style="left:1458px;top:517px;" width="24" height="24" viewBox="0 0 24 24" fill="none"><path d="M3 1h12l6 6v16H3z" fill="#fafafa" stroke="#3b3a39" stroke-width="1.4"/><path d="M15 1v6h6" stroke="#3b3a39" stroke-width="1"/><rect x="6" y="14" width="2.5" height="6" fill="#3b3a39"/><rect x="10.5" y="16" width="2.5" height="4" fill="#3b3a39"/><rect x="15" y="11" width="2.5" height="9" fill="#3b3a39"/></svg>
<svg class="r" style="left:1283px;top:552px;" width="24" height="24" viewBox="0 0 24 24" fill="none"><rect x="3.5" y="4.5" width="19" height="16" fill="#fff" stroke="#3b3a39" stroke-width="1.4"/><text x="5" y="15" font-family="Liberation Sans" font-size="9.5" fill="#4aa0e0">123</text><path d="M6 18h14" stroke="#a0a0a0"/><path d="M7 0.5h6l-4 5.5h4L3 16l3-7H2z" fill="#f5a623" stroke="#d9822b" stroke-width="0.8"/></svg>
<svg class="r" style="left:1318px;top:552px;" width="24" height="24" viewBox="0 0 24 24" fill="none"><path d="M13 22.5H3.5v-18h19v8" fill="#fff" stroke="#3b3a39" stroke-width="1.4"/><path d="M3.5 7h19" stroke="#a0a0a0" stroke-width="2"/><rect x="6" y="15" width="3" height="3" fill="#bdbdbd" stroke="#8a8886"/><path d="M12 14h11l-4 4v6h-3v-6z" fill="#fff" stroke="#3b3a39" stroke-width="1.4"/><path d="M7 0.5h6l-4 5.5h4L3 16l3-7H2z" fill="#f5a623" stroke="#d9822b" stroke-width="0.8"/></svg>
<svg class="r" style="left:1353px;top:552px;" width="24" height="24" viewBox="0 0 24 24" fill="none"><circle cx="12" cy="12" r="10.5" fill="#1f7fd6" stroke="#b0b0b0" stroke-width="1.2"/><path d="M4 8c3-2 5 1 4 4s-4 2-3 5M16 4c3 2 5 5 4 9M14 18c2-1 4 0 5-2" stroke="#2ea84a" stroke-width="3"/><path d="M2 10c6-3 14-3 20 0M2.5 15c6 3 13 3 19 0M8 2c-3 6-3 14 0 20M16 2c2 6 2 14 0 20" stroke="#b0b0b0" stroke-width="1"/></svg>
<svg class="r" style="left:1388px;top:552px;" width="24" height="24" viewBox="0 0 24 24" fill="none"><path d="M9 2l-7.5 10L9 22h6l7.5-10L15 2z" fill="#fafafa" stroke="#8b3fb8" stroke-width="1.4" stroke-linejoin="round"/><path d="M9 2l7.5 10L9 22M15 2L7.5 12 15 22" stroke="#8b3fb8" stroke-width="1.4" stroke-linejoin="round"/></svg>
<svg class="r" style="left:1423px;top:552px;" width="24" height="24" viewBox="0 0 24 24" fill="none"><path d="M1.5 3h12l8 9-8 9h-12l8-9z" fill="#fafafa" stroke="#1f7fd6" stroke-width="1.5" stroke-linejoin="round"/><path d="M6 21l10-11" stroke="#1f7fd6" stroke-width="1.5"/></svg>
<svg class="r" style="left:1458px;top:552px;" width="24" height="24" viewBox="0 0 24 24" fill="none"><circle cx="2.5" cy="12" r="1.3" fill="#3b3a39"/><circle cx="11" cy="12" r="1.3" fill="#3b3a39"/><circle cx="19.5" cy="12" r="1.3" fill="#3b3a39"/></svg>
<div class="r" style="left:1268px;top:586px;width:226px;height:1px;background:#d2d0ce;"></div>
<div class="t" style="left:1284.00px;top:601px;font-size:14.50px;color:#252423;transform:scaleX(1.0137);transform-origin:0 0;">Columns</div>
<div class="r" style="left:1274px;top:624px;width:213px;height:136px;background:#ffffff;border:1px dashed #c8c6c4;box-sizing:border-box;"></div>
<div class="r" style="left:1278px;top:629.6px;width:205px;height:27px;background:#eaeaea;border:1px solid #c8c6c4;box-sizing:border-box;border-radius:2px;"></div>
<div class="t" style="left:1284.00px;top:636px;font-size:14.50px;color:#252423;transform:scaleX(0.9052);transform-origin:0 0;">S.no</div>
<svg class="r" style="left:1444px;top:637.6px;" width="16" height="10" viewBox="0 0 16 10" fill="none"><path d="M1.5 1.5l6.5 6.5 6.5-6.5" stroke="#3b3a39" stroke-width="1.2"/></svg>
<svg class="r" style="left:1465px;top:637.1px;" width="13" height="13" viewBox="0 0 13 13" fill="none"><path d="M1.5 1.5l10 10M11.5 1.5l-10 10" stroke="#3b3a39" stroke-width="1.3"/></svg>
<div class="r" style="left:1278px;top:659.6px;width:205px;height:27px;background:#eaeaea;border:1px solid #c8c6c4;box-sizing:border-box;border-radius:2px;"></div>
<div class="t" style="left:1284.00px;top:666px;font-size:14.50px;color:#252423;transform:scaleX(0.9043);transform-origin:0 0;">Year</div>
<svg class="r" style="left:1444px;top:667.6px;" width="16" height="10" viewBox="0 0 16 10" fill="none"><path d="M1.5 1.5l6.5 6.5 6.5-6.5" stroke="#3b3a39" stroke-width="1.2"/></svg>
<svg class="r" style="left:1465px;top:667.1px;" width="13" height="13" viewBox="0 0 13 13" fill="none"><path d="M1.5 1.5l10 10M11.5 1.5l-10 10" stroke="#3b3a39" stroke-width="1.3"/></svg>
<div class="r" style="left:1278px;top:689.6px;width:205px;height:27px;background:#eaeaea;border:1px solid #c8c6c4;box-sizing:border-box;border-radius:2px;"></div>
<div class="t" style="left:1284.00px;top:696px;font-size:14.50px;color:#252423;transform:scaleX(1.0281);transform-origin:0 0;">Sum of Annual Income</div>
<svg class="r" style="left:1444px;top:697.6px;" width="16" height="10" viewBox="0 0 16 10" fill="none"><path d="M1.5 1.5l6.5 6.5 6.5-6.5" stroke="#3b3a39" stroke-width="1.2"/></svg>
<svg class="r" style="left:1465px;top:697.1px;" width="13" height="13" viewBox="0 0 13 13" fill="none"><path d="M1.5 1.5l10 10M11.5 1.5l-10 10" stroke="#3b3a39" stroke-width="1.3"/></svg>
<div class="r" style="left:1278px;top:719.6px;width:205px;height:27px;background:#eaeaea;border:1px solid #c8c6c4;box-sizing:border-box;border-radius:2px;"></div>
<div class="t" style="left:1284.00px;top:726px;font-size:14.50px;color:#252423;transform:scaleX(0.9157);transform-origin:0 0;">Sum of PARALLELPERI...</div>
<svg class="r" style="left:1444px;top:727.6px;" width="16" height="10" viewBox="0 0 16 10" fill="none"><path d="M1.5 1.5l6.5 6.5 6.5-6.5" stroke="#3b3a39" stroke-width="1.2"/></svg>
<svg class="r" style="left:1465px;top:727.1px;" width="13" height="13" viewBox="0 0 13 13" fill="none"><path d="M1.5 1.5l10 10M11.5 1.5l-10 10" stroke="#3b3a39" stroke-width="1.3"/></svg>
<div class="t" style="left:1284.00px;top:776px;font-size:14.50px;color:#252423;-webkit-text-stroke:0.45px #252423;transform:scaleX(1.1066);transform-origin:0 0;">Drill through</div>
<div class="t" style="left:1284.00px;top:807px;font-size:14.50px;color:#252423;transform:scaleX(1.0301);transform-origin:0 0;">Cross-report</div>
<div class="r" style="left:1427px;top:804.5px;width:40px;height:20px;background:#ffffff;border:1px solid #605e5c;box-sizing:border-box;border-radius:10px;"></div>
<div class="r" style="left:1432px;top:809px;width:10px;height:10px;border-radius:5px;background:#605e5c;"></div>
<div class="t" style="left:1444.00px;top:809px;font-size:11.50px;color:#605e5c;transform:scaleX(0.9896);transform-origin:0 0;">Off</div>
<div class="t" style="left:1284.00px;top:841px;font-size:14.50px;color:#252423;transform:scaleX(1.0102);transform-origin:0 0;">Keep all filters</div>
<div class="r" style="left:1427px;top:838.5px;width:40px;height:20px;background:#117865;border-radius:10px;"></div>
<div class="r" style="left:1452px;top:843px;width:10px;height:10px;border-radius:5px;background:#ffffff;"></div>
<div class="t" style="left:1433.00px;top:843px;font-size:11.50px;color:#ffffff;transform:scaleX(0.9126);transform-origin:0 0;">On</div>
<div class="r" style="left:1274px;top:871.5px;width:213px;height:31px;background:#ffffff;border:1px dashed #c8c6c4;box-sizing:border-box;"></div>
<div class="t" style="left:1285.00px;top:881px;font-size:14.50px;color:#252423;transform:scaleX(1.0602);transform-origin:0 0;">Add drill-through fields here</div>
<div class="t" style="left:1505.70px;top:215px;font-size:20.00px;color:#252423;-webkit-text-stroke:0.60px #252423;transform:scaleX(0.9655);transform-origin:0 0;">Data</div>
<svg class="r" style="left:1893px;top:216px;" width="18" height="18" viewBox="0 0 18 18" fill="none"><path d="M2 2l7 7-7 7M8.5 2l7 7-7 7" stroke="#3b3a39" stroke-width="1.4"/></svg>
<div class="r" style="left:1500px;top:257.5px;width:415px;height:32px;background:#f3f2f1;border:1px solid #8a8886;box-sizing:border-box;border-radius:2px;"></div>
<svg class="r" style="left:1509px;top:264px;" width="20" height="20" viewBox="0 0 20 20" fill="none"><circle cx="12" cy="8" r="5.8" stroke="#3b3a39" stroke-width="1.3"/><path d="M7.8 12.2L1.5 18.5" stroke="#3b3a39" stroke-width="1.4"/></svg>
<div class="t" style="left:1536.00px;top:266px;font-size:16.50px;color:#605e5c;transform:scaleX(0.9757);transform-origin:0 0;">Search</div>
<div class="r" style="left:1495px;top:300px;width:425px;height:690px;overflow:hidden;">
<div class="r" style="left:48px;top:-3.5px;width:15px;height:15px;background:transparent;border:1px solid #605e5c;box-sizing:border-box;border-radius:2px;"></div>
<svg class="r" style="left:72px;top:-5.699999999999989px;" width="16" height="19" viewBox="0 0 16 19" fill="none"><rect x="1.2" y="1" width="13.6" height="17" rx="3" stroke="#3b3a39" stroke-width="1.5"/><rect x="3.9" y="3.6" width="8.2" height="3.2" rx="1.2" stroke="#3b3a39" stroke-width="1.2"/><circle cx="4.6" cy="10.6" r="1.15" fill="#3b3a39"/><circle cx="8.0" cy="10.6" r="1.15" fill="#3b3a39"/><circle cx="11.4" cy="10.6" r="1.15" fill="#3b3a39"/><circle cx="4.6" cy="14.3" r="1.15" fill="#3b3a39"/><circle cx="8.0" cy="14.3" r="1.15" fill="#3b3a39"/><circle cx="11.4" cy="14.3" r="1.15" fill="#3b3a39"/></svg>
<div class="t" style="left:95.50px;top:-3px;font-size:14.50px;color:#42403e;transform:scaleX(1.0060);transform-origin:0 0;">Previous day income</div>
<div class="r" style="left:48px;top:26.46999999999997px;width:15px;height:15px;background:transparent;border:1px solid #605e5c;box-sizing:border-box;border-radius:2px;"></div>
<svg class="r" style="left:72px;top:24.269999999999982px;" width="16" height="19" viewBox="0 0 16 19" fill="none"><rect x="1.2" y="1" width="13.6" height="17" rx="3" stroke="#3b3a39" stroke-width="1.5"/><rect x="3.9" y="3.6" width="8.2" height="3.2" rx="1.2" stroke="#3b3a39" stroke-width="1.2"/><circle cx="4.6" cy="10.6" r="1.15" fill="#3b3a39"/><circle cx="8.0" cy="10.6" r="1.15" fill="#3b3a39"/><circle cx="11.4" cy="10.6" r="1.15" fill="#3b3a39"/><circle cx="4.6" cy="14.3" r="1.15" fill="#3b3a39"/><circle cx="8.0" cy="14.3" r="1.15" fill="#3b3a39"/><circle cx="11.4" cy="14.3" r="1.15" fill="#3b3a39"/></svg>
<div class="t" style="left:95.50px;top:27px;font-size:14.50px;color:#42403e;transform:scaleX(0.9944);transform-origin:0 0;">Revenue dod %</div>
<div class="r" style="left:48px;top:56.44px;width:15px;height:15px;background:#117865;border-radius:2px;"></div>
<svg class="r" style="left:48px;top:56.44px;" width="15" height="15" viewBox="0 0 15 15" fill="none"><path d="M3 7.8l3 3 6-6.5" stroke="#fff" stroke-width="1.5"/></svg>
<div class="t" style="left:95.50px;top:57px;font-size:14.50px;color:#42403e;transform:scaleX(0.9254);transform-origin:0 0;">S.no</div>
<div class="r" style="left:48px;top:86.41000000000003px;width:15px;height:15px;background:transparent;border:1px solid #605e5c;box-sizing:border-box;border-radius:2px;"></div>
<svg class="r" style="left:72px;top:84.21000000000004px;" width="16" height="19" viewBox="0 0 16 19" fill="none"><rect x="1.2" y="1" width="13.6" height="17" rx="3" stroke="#3b3a39" stroke-width="1.5"/><rect x="3.9" y="3.6" width="8.2" height="3.2" rx="1.2" stroke="#3b3a39" stroke-width="1.2"/><circle cx="4.6" cy="10.6" r="1.15" fill="#3b3a39"/><circle cx="8.0" cy="10.6" r="1.15" fill="#3b3a39"/><circle cx="11.4" cy="10.6" r="1.15" fill="#3b3a39"/><circle cx="4.6" cy="14.3" r="1.15" fill="#3b3a39"/><circle cx="8.0" cy="14.3" r="1.15" fill="#3b3a39"/><circle cx="11.4" cy="14.3" r="1.15" fill="#3b3a39"/></svg>
<div class="t" style="left:95.50px;top:87px;font-size:14.50px;color:#42403e;transform:scaleX(1.0396);transform-origin:0 0;">Sum of dateadd function income</div>
<div class="r" style="left:48px;top:116.38px;width:15px;height:15px;background:transparent;border:1px solid #605e5c;box-sizing:border-box;border-radius:2px;"></div>
<svg class="r" style="left:72px;top:114.18px;" width="16" height="19" viewBox="0 0 16 19" fill="none"><rect x="1.2" y="1" width="13.6" height="17" rx="3" stroke="#3b3a39" stroke-width="1.5"/><rect x="3.9" y="3.6" width="8.2" height="3.2" rx="1.2" stroke="#3b3a39" stroke-width="1.2"/><circle cx="4.6" cy="10.6" r="1.15" fill="#3b3a39"/><circle cx="8.0" cy="10.6" r="1.15" fill="#3b3a39"/><circle cx="11.4" cy="10.6" r="1.15" fill="#3b3a39"/><circle cx="4.6" cy="14.3" r="1.15" fill="#3b3a39"/><circle cx="8.0" cy="14.3" r="1.15" fill="#3b3a39"/><circle cx="11.4" cy="14.3" r="1.15" fill="#3b3a39"/></svg>
<div class="t" style="left:95.50px;top:117px;font-size:14.50px;color:#42403e;transform:scaleX(1.0476);transform-origin:0 0;">Sum of dateadd function income month</div>
<div class="r" style="left:48px;top:146.34999999999997px;width:15px;height:15px;background:transparent;border:1px solid #605e5c;box-sizing:border-box;border-radius:2px;"></div>
<svg class="r" style="left:72px;top:144.14999999999998px;" width="16" height="19" viewBox="0 0 16 19" fill="none"><rect x="1.2" y="1" width="13.6" height="17" rx="3" stroke="#3b3a39" stroke-width="1.5"/><rect x="3.9" y="3.6" width="8.2" height="3.2" rx="1.2" stroke="#3b3a39" stroke-width="1.2"/><circle cx="4.6" cy="10.6" r="1.15" fill="#3b3a39"/><circle cx="8.0" cy="10.6" r="1.15" fill="#3b3a39"/><circle cx="11.4" cy="10.6" r="1.15" fill="#3b3a39"/><circle cx="4.6" cy="14.3" r="1.15" fill="#3b3a39"/><circle cx="8.0" cy="14.3" r="1.15" fill="#3b3a39"/><circle cx="11.4" cy="14.3" r="1.15" fill="#3b3a39"/></svg>
<div class="t" style="left:95.50px;top:147px;font-size:14.50px;color:#42403e;transform:scaleX(1.0228);transform-origin:0 0;">Sum of next day income</div>
<div class="r" style="left:48px;top:176.32px;width:15px;height:15px;background:transparent;border:1px solid #605e5c;box-sizing:border-box;border-radius:2px;"></div>
<svg class="r" style="left:72px;top:174.12px;" width="16" height="19" viewBox="0 0 16 19" fill="none"><rect x="1.2" y="1" width="13.6" height="17" rx="3" stroke="#3b3a39" stroke-width="1.5"/><rect x="3.9" y="3.6" width="8.2" height="3.2" rx="1.2" stroke="#3b3a39" stroke-width="1.2"/><circle cx="4.6" cy="10.6" r="1.15" fill="#3b3a39"/><circle cx="8.0" cy="10.6" r="1.15" fill="#3b3a39"/><circle cx="11.4" cy="10.6" r="1.15" fill="#3b3a39"/><circle cx="4.6" cy="14.3" r="1.15" fill="#3b3a39"/><circle cx="8.0" cy="14.3" r="1.15" fill="#3b3a39"/><circle cx="11.4" cy="14.3" r="1.15" fill="#3b3a39"/></svg>
<div class="t" style="left:95.50px;top:177px;font-size:14.50px;color:#42403e;transform:scaleX(1.0401);transform-origin:0 0;">Sum of next month income</div>
<div class="r" style="left:48px;top:206.29000000000002px;width:15px;height:15px;background:transparent;border:1px solid #605e5c;box-sizing:border-box;border-radius:2px;"></div>
<svg class="r" style="left:72px;top:204.09000000000003px;" width="16" height="19" viewBox="0 0 16 19" fill="none"><rect x="1.2" y="1" width="13.6" height="17" rx="3" stroke="#3b3a39" stroke-width="1.5"/><rect x="3.9" y="3.6" width="8.2" height="3.2" rx="1.2" stroke="#3b3a39" stroke-width="1.2"/><circle cx="4.6" cy="10.6" r="1.15" fill="#3b3a39"/><circle cx="8.0" cy="10.6" r="1.15" fill="#3b3a39"/><circle cx="11.4" cy="10.6" r="1.15" fill="#3b3a39"/><circle cx="4.6" cy="14.3" r="1.15" fill="#3b3a39"/><circle cx="8.0" cy="14.3" r="1.15" fill="#3b3a39"/><circle cx="11.4" cy="14.3" r="1.15" fill="#3b3a39"/></svg>
<div class="t" style="left:95.50px;top:207px;font-size:14.50px;color:#42403e;transform:scaleX(1.0336);transform-origin:0 0;">Sum of next quarter income</div>
<div class="r" style="left:48px;top:236.26px;width:15px;height:15px;background:transparent;border:1px solid #605e5c;box-sizing:border-box;border-radius:2px;"></div>
<svg class="r" style="left:72px;top:234.05999999999995px;" width="16" height="19" viewBox="0 0 16 19" fill="none"><rect x="1.2" y="1" width="13.6" height="17" rx="3" stroke="#3b3a39" stroke-width="1.5"/><rect x="3.9" y="3.6" width="8.2" height="3.2" rx="1.2" stroke="#3b3a39" stroke-width="1.2"/><circle cx="4.6" cy="10.6" r="1.15" fill="#3b3a39"/><circle cx="8.0" cy="10.6" r="1.15" fill="#3b3a39"/><circle cx="11.4" cy="10.6" r="1.15" fill="#3b3a39"/><circle cx="4.6" cy="14.3" r="1.15" fill="#3b3a39"/><circle cx="8.0" cy="14.3" r="1.15" fill="#3b3a39"/><circle cx="11.4" cy="14.3" r="1.15" fill="#3b3a39"/></svg>
<div class="t" style="left:95.50px;top:237px;font-size:14.50px;color:#42403e;transform:scaleX(1.0200);transform-origin:0 0;">Sum of next year income</div>
<div class="r" style="left:6px;top:258.53px;width:403px;height:29px;background:#d2d0ce;"></div>
<div class="r" style="left:48px;top:266.23px;width:15px;height:15px;background:#117865;border-radius:2px;"></div>
<svg class="r" style="left:48px;top:266.23px;" width="15" height="15" viewBox="0 0 15 15" fill="none"><path d="M3 7.8l3 3 6-6.5" stroke="#fff" stroke-width="1.5"/></svg>
<svg class="r" style="left:72px;top:264.03px;" width="16" height="19" viewBox="0 0 16 19" fill="none"><rect x="1.2" y="1" width="13.6" height="17" rx="3" stroke="#3b3a39" stroke-width="1.5"/><rect x="3.9" y="3.6" width="8.2" height="3.2" rx="1.2" stroke="#3b3a39" stroke-width="1.2"/><circle cx="4.6" cy="10.6" r="1.15" fill="#3b3a39"/><circle cx="8.0" cy="10.6" r="1.15" fill="#3b3a39"/><circle cx="11.4" cy="10.6" r="1.15" fill="#3b3a39"/><circle cx="4.6" cy="14.3" r="1.15" fill="#3b3a39"/><circle cx="8.0" cy="14.3" r="1.15" fill="#3b3a39"/><circle cx="11.4" cy="14.3" r="1.15" fill="#3b3a39"/></svg>
<div class="t" style="left:95.50px;top:267px;font-size:14.50px;color:#42403e;transform:scaleX(0.9545);transform-origin:0 0;">Sum of PARALLELPERIOD income</div>
<div class="r" style="left:48px;top:296.20000000000005px;width:15px;height:15px;background:transparent;border:1px solid #605e5c;box-sizing:border-box;border-radius:2px;"></div>
<svg class="r" style="left:72px;top:294.0px;" width="16" height="19" viewBox="0 0 16 19" fill="none"><rect x="1.2" y="1" width="13.6" height="17" rx="3" stroke="#3b3a39" stroke-width="1.5"/><rect x="3.9" y="3.6" width="8.2" height="3.2" rx="1.2" stroke="#3b3a39" stroke-width="1.2"/><circle cx="4.6" cy="10.6" r="1.15" fill="#3b3a39"/><circle cx="8.0" cy="10.6" r="1.15" fill="#3b3a39"/><circle cx="11.4" cy="10.6" r="1.15" fill="#3b3a39"/><circle cx="4.6" cy="14.3" r="1.15" fill="#3b3a39"/><circle cx="8.0" cy="14.3" r="1.15" fill="#3b3a39"/><circle cx="11.4" cy="14.3" r="1.15" fill="#3b3a39"/></svg>
<div class="t" style="left:95.50px;top:297px;font-size:14.50px;color:#42403e;transform:scaleX(1.0382);transform-origin:0 0;">Sum of previous month income</div>
<div class="r" style="left:48px;top:326.1700000000001px;width:15px;height:15px;background:transparent;border:1px solid #605e5c;box-sizing:border-box;border-radius:2px;"></div>
<svg class="r" style="left:72px;top:323.97px;" width="16" height="19" viewBox="0 0 16 19" fill="none"><rect x="1.2" y="1" width="13.6" height="17" rx="3" stroke="#3b3a39" stroke-width="1.5"/><rect x="3.9" y="3.6" width="8.2" height="3.2" rx="1.2" stroke="#3b3a39" stroke-width="1.2"/><circle cx="4.6" cy="10.6" r="1.15" fill="#3b3a39"/><circle cx="8.0" cy="10.6" r="1.15" fill="#3b3a39"/><circle cx="11.4" cy="10.6" r="1.15" fill="#3b3a39"/><circle cx="4.6" cy="14.3" r="1.15" fill="#3b3a39"/><circle cx="8.0" cy="14.3" r="1.15" fill="#3b3a39"/><circle cx="11.4" cy="14.3" r="1.15" fill="#3b3a39"/></svg>
<div class="t" style="left:95.50px;top:327px;font-size:14.50px;color:#42403e;transform:scaleX(1.0311);transform-origin:0 0;">Sum of previous quarter income</div>
<div class="r" style="left:48px;top:356.1400000000001px;width:15px;height:15px;background:transparent;border:1px solid #605e5c;box-sizing:border-box;border-radius:2px;"></div>
<svg class="r" style="left:72px;top:353.94000000000005px;" width="16" height="19" viewBox="0 0 16 19" fill="none"><rect x="1.2" y="1" width="13.6" height="17" rx="3" stroke="#3b3a39" stroke-width="1.5"/><rect x="3.9" y="3.6" width="8.2" height="3.2" rx="1.2" stroke="#3b3a39" stroke-width="1.2"/><circle cx="4.6" cy="10.6" r="1.15" fill="#3b3a39"/><circle cx="8.0" cy="10.6" r="1.15" fill="#3b3a39"/><circle cx="11.4" cy="10.6" r="1.15" fill="#3b3a39"/><circle cx="4.6" cy="14.3" r="1.15" fill="#3b3a39"/><circle cx="8.0" cy="14.3" r="1.15" fill="#3b3a39"/><circle cx="11.4" cy="14.3" r="1.15" fill="#3b3a39"/></svg>
<div class="t" style="left:95.50px;top:357px;font-size:14.50px;color:#42403e;transform:scaleX(1.0188);transform-origin:0 0;">Sum of previous year income</div>
<div class="r" style="left:48px;top:386.1100000000001px;width:15px;height:15px;background:transparent;border:1px solid #605e5c;box-sizing:border-box;border-radius:2px;"></div>
<svg class="r" style="left:72px;top:383.9100000000001px;" width="16" height="19" viewBox="0 0 16 19" fill="none"><rect x="1.2" y="1" width="13.6" height="17" rx="3" stroke="#3b3a39" stroke-width="1.5"/><rect x="3.9" y="3.6" width="8.2" height="3.2" rx="1.2" stroke="#3b3a39" stroke-width="1.2"/><circle cx="4.6" cy="10.6" r="1.15" fill="#3b3a39"/><circle cx="8.0" cy="10.6" r="1.15" fill="#3b3a39"/><circle cx="11.4" cy="10.6" r="1.15" fill="#3b3a39"/><circle cx="4.6" cy="14.3" r="1.15" fill="#3b3a39"/><circle cx="8.0" cy="14.3" r="1.15" fill="#3b3a39"/><circle cx="11.4" cy="14.3" r="1.15" fill="#3b3a39"/></svg>
<div class="t" style="left:95.50px;top:387px;font-size:14.50px;color:#42403e;transform:scaleX(1.0186);transform-origin:0 0;">Sum of sameperiodlastyear income</div>
<div class="r" style="left:48px;top:416.08000000000004px;width:15px;height:15px;background:transparent;border:1px solid #605e5c;box-sizing:border-box;border-radius:2px;"></div>
<svg class="r" style="left:72px;top:413.88px;" width="16" height="19" viewBox="0 0 16 19" fill="none"><rect x="1.2" y="1" width="13.6" height="17" rx="3" stroke="#3b3a39" stroke-width="1.5"/><rect x="3.9" y="3.6" width="8.2" height="3.2" rx="1.2" stroke="#3b3a39" stroke-width="1.2"/><circle cx="4.6" cy="10.6" r="1.15" fill="#3b3a39"/><circle cx="8.0" cy="10.6" r="1.15" fill="#3b3a39"/><circle cx="11.4" cy="10.6" r="1.15" fill="#3b3a39"/><circle cx="4.6" cy="14.3" r="1.15" fill="#3b3a39"/><circle cx="8.0" cy="14.3" r="1.15" fill="#3b3a39"/><circle cx="11.4" cy="14.3" r="1.15" fill="#3b3a39"/></svg>
<div class="t" style="left:95.50px;top:417px;font-size:14.50px;color:#42403e;transform:scaleX(0.9817);transform-origin:0 0;">The CLOSINGBALANCEMONTH function</div>
<div class="r" style="left:48px;top:446.04999999999995px;width:15px;height:15px;background:transparent;border:1px solid #605e5c;box-sizing:border-box;border-radius:2px;"></div>
<svg class="r" style="left:72px;top:443.8499999999999px;" width="16" height="19" viewBox="0 0 16 19" fill="none"><rect x="1.2" y="1" width="13.6" height="17" rx="3" stroke="#3b3a39" stroke-width="1.5"/><rect x="3.9" y="3.6" width="8.2" height="3.2" rx="1.2" stroke="#3b3a39" stroke-width="1.2"/><circle cx="4.6" cy="10.6" r="1.15" fill="#3b3a39"/><circle cx="8.0" cy="10.6" r="1.15" fill="#3b3a39"/><circle cx="11.4" cy="10.6" r="1.15" fill="#3b3a39"/><circle cx="4.6" cy="14.3" r="1.15" fill="#3b3a39"/><circle cx="8.0" cy="14.3" r="1.15" fill="#3b3a39"/><circle cx="11.4" cy="14.3" r="1.15" fill="#3b3a39"/></svg>
<div class="t" style="left:95.50px;top:447px;font-size:14.50px;color:#42403e;transform:scaleX(0.9526);transform-origin:0 0;">The CLOSINGBALANCEQUARTER function</div>
<div class="r" style="left:48px;top:476.02px;width:15px;height:15px;background:transparent;border:1px solid #605e5c;box-sizing:border-box;border-radius:2px;"></div>
<svg class="r" style="left:72px;top:473.81999999999994px;" width="16" height="19" viewBox="0 0 16 19" fill="none"><rect x="1.2" y="1" width="13.6" height="17" rx="3" stroke="#3b3a39" stroke-width="1.5"/><rect x="3.9" y="3.6" width="8.2" height="3.2" rx="1.2" stroke="#3b3a39" stroke-width="1.2"/><circle cx="4.6" cy="10.6" r="1.15" fill="#3b3a39"/><circle cx="8.0" cy="10.6" r="1.15" fill="#3b3a39"/><circle cx="11.4" cy="10.6" r="1.15" fill="#3b3a39"/><circle cx="4.6" cy="14.3" r="1.15" fill="#3b3a39"/><circle cx="8.0" cy="14.3" r="1.15" fill="#3b3a39"/><circle cx="11.4" cy="14.3" r="1.15" fill="#3b3a39"/></svg>
<div class="t" style="left:95.50px;top:477px;font-size:14.50px;color:#42403e;transform:scaleX(0.9548);transform-origin:0 0;">The CLOSINGBALANCEYEAR function</div>
<div class="r" style="left:48px;top:505.99px;width:15px;height:15px;background:transparent;border:1px solid #605e5c;box-sizing:border-box;border-radius:2px;"></div>
<svg class="r" style="left:72px;top:503.78999999999996px;" width="16" height="19" viewBox="0 0 16 19" fill="none"><rect x="1.2" y="1" width="13.6" height="17" rx="3" stroke="#3b3a39" stroke-width="1.5"/><rect x="3.9" y="3.6" width="8.2" height="3.2" rx="1.2" stroke="#3b3a39" stroke-width="1.2"/><circle cx="4.6" cy="10.6" r="1.15" fill="#3b3a39"/><circle cx="8.0" cy="10.6" r="1.15" fill="#3b3a39"/><circle cx="11.4" cy="10.6" r="1.15" fill="#3b3a39"/><circle cx="4.6" cy="14.3" r="1.15" fill="#3b3a39"/><circle cx="8.0" cy="14.3" r="1.15" fill="#3b3a39"/><circle cx="11.4" cy="14.3" r="1.15" fill="#3b3a39"/></svg>
<div class="t" style="left:95.50px;top:507px;font-size:14.50px;color:#42403e;transform:scaleX(1.0099);transform-origin:0 0;">The DatesBetween function</div>
<div class="r" style="left:48px;top:535.96px;width:15px;height:15px;background:transparent;border:1px solid #605e5c;box-sizing:border-box;border-radius:2px;"></div>
<svg class="r" style="left:72px;top:533.76px;" width="16" height="19" viewBox="0 0 16 19" fill="none"><rect x="1.2" y="1" width="13.6" height="17" rx="3" stroke="#3b3a39" stroke-width="1.5"/><rect x="3.9" y="3.6" width="8.2" height="3.2" rx="1.2" stroke="#3b3a39" stroke-width="1.2"/><circle cx="4.6" cy="10.6" r="1.15" fill="#3b3a39"/><circle cx="8.0" cy="10.6" r="1.15" fill="#3b3a39"/><circle cx="11.4" cy="10.6" r="1.15" fill="#3b3a39"/><circle cx="4.6" cy="14.3" r="1.15" fill="#3b3a39"/><circle cx="8.0" cy="14.3" r="1.15" fill="#3b3a39"/><circle cx="11.4" cy="14.3" r="1.15" fill="#3b3a39"/></svg>
<div class="t" style="left:95.50px;top:537px;font-size:14.50px;color:#42403e;transform:scaleX(1.0323);transform-origin:0 0;">The Datesinperiod function</div>
<div class="r" style="left:48px;top:565.9300000000001px;width:15px;height:15px;background:transparent;border:1px solid #605e5c;box-sizing:border-box;border-radius:2px;"></div>
<svg class="r" style="left:72px;top:563.73px;" width="16" height="19" viewBox="0 0 16 19" fill="none"><rect x="1.2" y="1" width="13.6" height="17" rx="3" stroke="#3b3a39" stroke-width="1.5"/><rect x="3.9" y="3.6" width="8.2" height="3.2" rx="1.2" stroke="#3b3a39" stroke-width="1.2"/><circle cx="4.6" cy="10.6" r="1.15" fill="#3b3a39"/><circle cx="8.0" cy="10.6" r="1.15" fill="#3b3a39"/><circle cx="11.4" cy="10.6" r="1.15" fill="#3b3a39"/><circle cx="4.6" cy="14.3" r="1.15" fill="#3b3a39"/><circle cx="8.0" cy="14.3" r="1.15" fill="#3b3a39"/><circle cx="11.4" cy="14.3" r="1.15" fill="#3b3a39"/></svg>
<div class="t" style="left:95.50px;top:567px;font-size:14.50px;color:#42403e;transform:scaleX(1.0417);transform-origin:0 0;">The Datesinperiod month function</div>
<div class="r" style="left:48px;top:595.9000000000001px;width:15px;height:15px;background:transparent;border:1px solid #605e5c;box-sizing:border-box;border-radius:2px;"></div>
<svg class="r" style="left:72px;top:593.7px;" width="16" height="19" viewBox="0 0 16 19" fill="none"><rect x="1.2" y="1" width="13.6" height="17" rx="3" stroke="#3b3a39" stroke-width="1.5"/><rect x="3.9" y="3.6" width="8.2" height="3.2" rx="1.2" stroke="#3b3a39" stroke-width="1.2"/><circle cx="4.6" cy="10.6" r="1.15" fill="#3b3a39"/><circle cx="8.0" cy="10.6" r="1.15" fill="#3b3a39"/><circle cx="11.4" cy="10.6" r="1.15" fill="#3b3a39"/><circle cx="4.6" cy="14.3" r="1.15" fill="#3b3a39"/><circle cx="8.0" cy="14.3" r="1.15" fill="#3b3a39"/><circle cx="11.4" cy="14.3" r="1.15" fill="#3b3a39"/></svg>
<div class="t" style="left:95.50px;top:596px;font-size:14.50px;color:#42403e;">The DatesQTD function</div>
<div class="r" style="left:48px;top:625.8700000000001px;width:15px;height:15px;background:transparent;border:1px solid #605e5c;box-sizing:border-box;border-radius:2px;"></div>
<svg class="r" style="left:72px;top:623.6700000000001px;" width="16" height="19" viewBox="0 0 16 19" fill="none"><rect x="1.2" y="1" width="13.6" height="17" rx="3" stroke="#3b3a39" stroke-width="1.5"/><rect x="3.9" y="3.6" width="8.2" height="3.2" rx="1.2" stroke="#3b3a39" stroke-width="1.2"/><circle cx="4.6" cy="10.6" r="1.15" fill="#3b3a39"/><circle cx="8.0" cy="10.6" r="1.15" fill="#3b3a39"/><circle cx="11.4" cy="10.6" r="1.15" fill="#3b3a39"/><circle cx="4.6" cy="14.3" r="1.15" fill="#3b3a39"/><circle cx="8.0" cy="14.3" r="1.15" fill="#3b3a39"/><circle cx="11.4" cy="14.3" r="1.15" fill="#3b3a39"/></svg>
<div class="t" style="left:95.50px;top:626px;font-size:14.50px;color:#42403e;">The DatesYTD function</div>
<div class="r" style="left:48px;top:655.8399999999999px;width:15px;height:15px;background:transparent;border:1px solid #605e5c;box-sizing:border-box;border-radius:2px;"></div>
<svg class="r" style="left:72px;top:653.6399999999999px;" width="16" height="19" viewBox="0 0 16 19" fill="none"><rect x="1.2" y="1" width="13.6" height="17" rx="3" stroke="#3b3a39" stroke-width="1.5"/><rect x="3.9" y="3.6" width="8.2" height="3.2" rx="1.2" stroke="#3b3a39" stroke-width="1.2"/><circle cx="4.6" cy="10.6" r="1.15" fill="#3b3a39"/><circle cx="8.0" cy="10.6" r="1.15" fill="#3b3a39"/><circle cx="11.4" cy="10.6" r="1.15" fill="#3b3a39"/><circle cx="4.6" cy="14.3" r="1.15" fill="#3b3a39"/><circle cx="8.0" cy="14.3" r="1.15" fill="#3b3a39"/><circle cx="11.4" cy="14.3" r="1.15" fill="#3b3a39"/></svg>
<div class="t" style="left:95.50px;top:656px;font-size:14.50px;color:#42403e;transform:scaleX(1.0195);transform-origin:0 0;">The DatesYTD function with end date</div>
<div class="r" style="left:48px;top:685.81px;width:15px;height:15px;background:transparent;border:1px solid #605e5c;box-sizing:border-box;border-radius:2px;"></div>
<svg class="r" style="left:72px;top:683.6099999999999px;" width="16" height="19" viewBox="0 0 16 19" fill="none"><rect x="1.2" y="1" width="13.6" height="17" rx="3" stroke="#3b3a39" stroke-width="1.5"/><rect x="3.9" y="3.6" width="8.2" height="3.2" rx="1.2" stroke="#3b3a39" stroke-width="1.2"/><circle cx="4.6" cy="10.6" r="1.15" fill="#3b3a39"/><circle cx="8.0" cy="10.6" r="1.15" fill="#3b3a39"/><circle cx="11.4" cy="10.6" r="1.15" fill="#3b3a39"/><circle cx="4.6" cy="14.3" r="1.15" fill="#3b3a39"/><circle cx="8.0" cy="14.3" r="1.15" fill="#3b3a39"/><circle cx="11.4" cy="14.3" r="1.15" fill="#3b3a39"/></svg>
<div class="t" style="left:95.50px;top:686px;font-size:14.50px;color:#42403e;transform:scaleX(0.9645);transform-origin:0 0;">The end of month function</div>
</div>
<div class="r" style="left:1905px;top:539.5px;width:10px;height:319px;background:#c8c6c4;"></div>
<div class="r" style="left:51px;top:956px;width:160px;height:44px;background:#f3f2f1;"></div>
<div class="r" style="left:211px;top:956px;width:1008px;height:44px;background:#ffffff;"></div>
<div class="r" style="left:210px;top:956px;width:1px;height:44px;background:#8a8886;"></div>
<svg class="r" style="left:64px;top:964px;" width="27" height="25" viewBox="0 0 27 25" fill="none"><rect x="1.5" y="2" width="24" height="15" rx="1" stroke="#3b3a39" stroke-width="1.4"/><path d="M13.5 17v4M8 21.5h11" stroke="#3b3a39" stroke-width="1.4"/></svg>
<div class="r" style="left:64px;top:991px;width:30px;height:4px;background:#117865;border-radius:2px;"></div>
<svg class="r" style="left:124px;top:961px;" width="18" height="28" viewBox="0 0 18 28" fill="none"><rect x="1.5" y="1.5" width="15" height="25" rx="2" stroke="#3b3a39" stroke-width="1.4"/><path d="M8 22.5h2" stroke="#3b3a39" stroke-width="1.4"/></svg>
<svg class="r" style="left:166px;top:971px;" width="9" height="12" viewBox="0 0 9 12" fill="none"><path d="M7 1L1 6l6 5z" fill="#3b3a39"/></svg>
<svg class="r" style="left:195px;top:971px;" width="9" height="12" viewBox="0 0 9 12" fill="none"><path d="M2 1l6 5-6 5z" fill="#a19f9d"/></svg>
<div class="r" style="left:211px;top:956px;width:1008px;height:44px;overflow:hidden;">
<div class="t" style="left:0.50px;top:14px;font-size:16.00px;color:#252423;transform:scaleX(0.8479);transform-origin:0 0;">age 14</div>
<div class="t" style="left:93.00px;top:14px;font-size:16.00px;color:#252423;transform:scaleX(0.9400);transform-origin:0 0;">Grouping and Binning</div>
<div class="t" style="left:290.50px;top:14px;font-size:16.00px;color:#252423;transform:scaleX(0.8984);transform-origin:0 0;">Area Chart</div>
<div class="t" style="left:411.00px;top:14px;font-size:16.00px;color:#252423;transform:scaleX(0.9076);transform-origin:0 0;">Line Chart</div>
<div class="t" style="left:529.00px;top:14px;font-size:16.00px;color:#252423;transform:scaleX(0.9248);transform-origin:0 0;">Combo Chart</div>
<div class="t" style="left:669.00px;top:14px;font-size:16.00px;color:#252423;transform:scaleX(0.9428);transform-origin:0 0;">Doughnut Chart</div>
<div class="t" style="left:827.00px;top:14px;font-size:16.00px;color:#252423;transform:scaleX(0.8639);transform-origin:0 0;">Page 15</div>
</div>
<div class="r" style="left:278px;top:956px;width:1px;height:44px;background:#d2d0ce;"></div>
<div class="r" style="left:475px;top:956px;width:1px;height:44px;background:#d2d0ce;"></div>
<div class="r" style="left:596px;top:956px;width:1px;height:44px;background:#d2d0ce;"></div>
<div class="r" style="left:714px;top:956px;width:1px;height:44px;background:#d2d0ce;"></div>
<div class="r" style="left:853px;top:956px;width:1px;height:44px;background:#d2d0ce;"></div>
<div class="r" style="left:1011px;top:956px;width:1px;height:44px;background:#d2d0ce;"></div>
<div class="r" style="left:1115px;top:956px;width:1px;height:44px;background:#d2d0ce;"></div>
<div class="t" style="left:1141.00px;top:970px;font-size:16.00px;color:#252423;-webkit-text-stroke:0.45px #252423;transform:scaleX(0.8471);transform-origin:0 0;">Page 16</div>
<div class="r" style="left:1116px;top:995px;width:103px;height:5px;background:#117865;"></div>
<div class="r" style="left:1219px;top:958px;width:49px;height:40px;background:#117865;"></div>
<svg class="r" style="left:1235px;top:970px;" width="16" height="16" viewBox="0 0 16 16" fill="none"><path d="M8 1.3v13.6M1.3 8h13.6" stroke="#fff" stroke-width="2.8"/></svg>
<div class="t" style="left:5.00px;top:1010px;font-size:14.50px;color:#605e5c;transform:scaleX(0.9966);transform-origin:0 0;">Page 45 of 45</div>
<div class="r" style="left:1655px;top:1014px;width:6px;height:2px;background:#605e5c;"></div>
<div class="r" style="left:1667px;top:1014.5px;width:125px;height:1px;background:#605e5c;"></div>
<div class="r" style="left:1708px;top:1009px;width:5px;height:13px;background:#605e5c;"></div>
<div class="r" style="left:1729.5px;top:1011px;width:1px;height:8px;background:#605e5c;"></div>
<svg class="r" style="left:1797px;top:1008px;" width="14" height="14" viewBox="0 0 14 14" fill="none"><path d="M7 1v12M1 7h12" stroke="#3b3a39" stroke-width="1.8"/></svg>
<div class="t" style="left:1825.00px;top:1008px;font-size:14.50px;color:#605e5c;transform:scaleX(0.9650);transform-origin:0 0;">73%</div>
<svg class="r" style="left:1876px;top:1008px;" width="22" height="17" viewBox="0 0 22 17" fill="none"><rect x="1" y="1" width="20" height="15" stroke="#605e5c" stroke-width="1.3"/><path d="M4 6V4h3M15 4h3v2M4 11v2h3M15 13h3v-2" stroke="#605e5c" stroke-width="1.2"/></svg></body></html>
